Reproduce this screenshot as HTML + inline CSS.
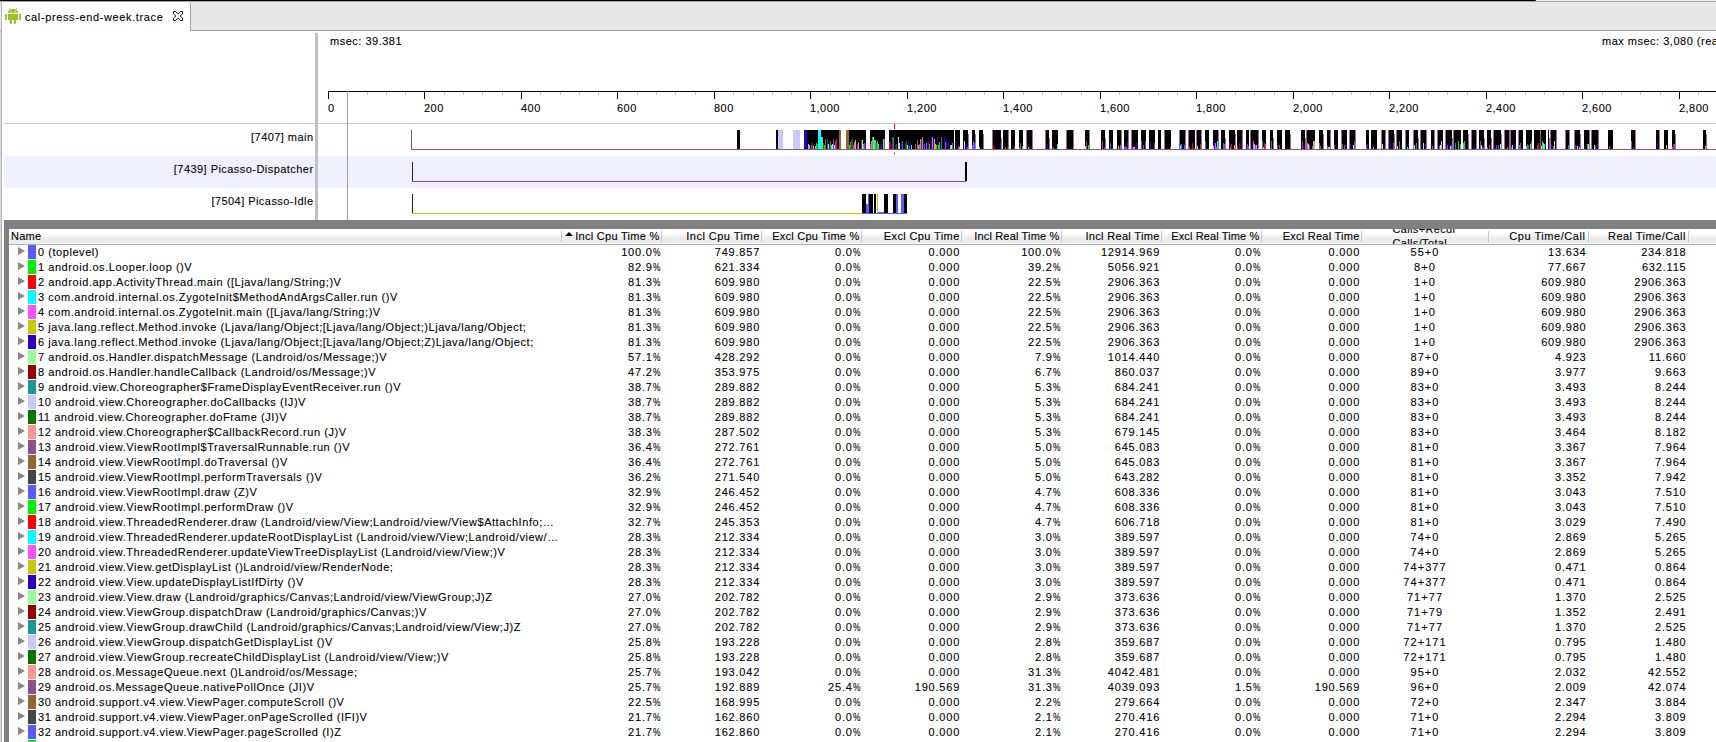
<!DOCTYPE html>
<html><head><meta charset="utf-8"><style>
*{margin:0;padding:0;box-sizing:border-box}
html,body{width:1716px;height:742px;overflow:hidden;background:#fff}
body{position:relative;font-family:"Liberation Sans",sans-serif;font-size:11px;color:#000;-webkit-text-stroke:0.1px #000}
.a{position:absolute}
.t{position:absolute;white-space:pre;line-height:15px}
.r{text-align:right}
.hd{position:absolute;white-space:pre;line-height:13px;letter-spacing:0.25px}
.v{position:absolute;white-space:pre;line-height:15px;text-align:right;letter-spacing:0.8px}
.nm{position:absolute;white-space:pre;line-height:15px;letter-spacing:0.55px;left:38px}
.tri{position:absolute;left:17.8px;width:0;height:0;border-top:4.7px solid transparent;border-bottom:4.7px solid transparent;border-left:7.6px solid #888}
.sq{position:absolute;left:28px;width:8px;height:14px}
.p{display:inline-block;width:7.4px;transform:scaleX(.76);transform-origin:0 0;letter-spacing:0}
.sep{position:absolute;top:231px;width:1px;height:11px;background:#c8c8c8}
</style></head><body>

<div class="a" style="left:0;top:0;width:1716px;height:30px;background:#e8e8e8"></div>
<div class="a" style="left:1537px;top:0;width:179px;height:1px;background:#f0f0f0"></div>
<div class="a" style="left:0;top:0;width:1536px;height:1px;background:#000;border-bottom-right-radius:1px"></div>
<div class="a" style="left:0;top:1px;width:1716px;height:1px;background:#a8a8a8"></div>
<div class="a" style="left:0;top:30px;width:1716px;height:1px;background:#a0a0a0"></div>
<div class="a" style="left:1px;top:2px;width:190px;height:29px;background:#fff;border-left:1px solid #b8b8b8;border-right:1px solid #a0a0a0;border-top-right-radius:3px"></div>
<svg class="a" style="left:4px;top:7px" width="18" height="18" viewBox="0 0 18 18">
<g fill="#97c024">
<path d="M3.8 5.8 L3.8 5 Q4.5 2 8.9 2 Q13.3 2 14 5 L14 5.8 Z"/>
<path d="M5 1 L6.4 2.6" stroke="#97c024" stroke-width="0.9"/>
<path d="M12.8 1 L11.4 2.6" stroke="#97c024" stroke-width="0.9"/>
<path d="M4 7 L14 7 L14 12.3 Q14 13 13.3 13 L4.7 13 Q4 13 4 12.3 Z"/>
<rect x="1" y="7" width="1.8" height="6"/>
<rect x="15.2" y="7" width="1.8" height="6"/>
<rect x="5.7" y="12.5" width="2.1" height="4.3"/>
<rect x="9.8" y="12.5" width="2.1" height="4.3"/>
</g>
<circle cx="6.3" cy="4.5" r="0.6" fill="#fff"/><circle cx="11.4" cy="4.5" r="0.6" fill="#fff"/>
</svg>
<div class="t" style="left:25px;top:10px;letter-spacing:0.62px">cal-press-end-week.trace</div>
<svg class="a" style="left:172px;top:10px" width="12" height="12" viewBox="0 0 12 12">
<path d="M1.5 1.5 L3.8 1.5 L6 3.9 L8.2 1.5 L10.5 1.5 L10.5 3.8 L8.1 6 L10.5 8.2 L10.5 10.5 L8.2 10.5 L6 8.1 L3.8 10.5 L1.5 10.5 L1.5 8.2 L3.9 6 L1.5 3.8 Z" fill="#fff" stroke="#000" stroke-width="0.95" stroke-linejoin="round"/>
</svg>
<div class="a" style="left:0;top:31px;width:1px;height:711px;background:#d8d8d8"></div>
<div class="a" style="left:1px;top:31px;width:1px;height:711px;background:#b8b8b8"></div>
<div class="a" style="left:4px;top:123px;width:1712px;height:1px;background:#c4c4c4"></div>
<div class="a" style="left:4px;top:156px;width:1712px;height:32px;background:#f0effd"></div>
<div class="a" style="left:315px;top:33px;width:3px;height:187px;background:#c0c0c0"></div>
<div class="t r" style="left:100px;width:213.5px;top:130px;letter-spacing:0.45px">[7407] main</div>
<div class="t r" style="left:100px;width:213.5px;top:162px;letter-spacing:0.45px">[7439] Picasso-Dispatcher</div>
<div class="t r" style="left:100px;width:213.5px;top:194px;letter-spacing:0.45px">[7504] Picasso-Idle</div>
<div class="t" style="left:330px;top:34px;letter-spacing:0.5px">msec: 39.381</div>
<div class="t" style="left:1602px;top:34px;letter-spacing:0.5px">max msec: 3,080 (real)</div>
<svg class="a" style="left:0;top:0" width="1716" height="220" viewBox="0 0 1716 220" shape-rendering="crispEdges">
<rect x="328" y="91" width="1388" height="1" fill="#000"/>
<rect x="328" y="91" width="1" height="8" fill="#000"/>
<rect x="347" y="92" width="1" height="3" fill="#c0c0c0"/>
<rect x="367" y="92" width="1" height="3" fill="#c0c0c0"/>
<rect x="386" y="92" width="1" height="3" fill="#c0c0c0"/>
<rect x="405" y="92" width="1" height="3" fill="#c0c0c0"/>
<rect x="424" y="91" width="1" height="8" fill="#000"/>
<rect x="444" y="92" width="1" height="3" fill="#c0c0c0"/>
<rect x="463" y="92" width="1" height="3" fill="#c0c0c0"/>
<rect x="482" y="92" width="1" height="3" fill="#c0c0c0"/>
<rect x="502" y="92" width="1" height="3" fill="#c0c0c0"/>
<rect x="521" y="91" width="1" height="8" fill="#000"/>
<rect x="540" y="92" width="1" height="3" fill="#c0c0c0"/>
<rect x="560" y="92" width="1" height="3" fill="#c0c0c0"/>
<rect x="579" y="92" width="1" height="3" fill="#c0c0c0"/>
<rect x="598" y="92" width="1" height="3" fill="#c0c0c0"/>
<rect x="617" y="91" width="1" height="8" fill="#000"/>
<rect x="637" y="92" width="1" height="3" fill="#c0c0c0"/>
<rect x="656" y="92" width="1" height="3" fill="#c0c0c0"/>
<rect x="675" y="92" width="1" height="3" fill="#c0c0c0"/>
<rect x="695" y="92" width="1" height="3" fill="#c0c0c0"/>
<rect x="714" y="91" width="1" height="8" fill="#000"/>
<rect x="733" y="92" width="1" height="3" fill="#c0c0c0"/>
<rect x="753" y="92" width="1" height="3" fill="#c0c0c0"/>
<rect x="772" y="92" width="1" height="3" fill="#c0c0c0"/>
<rect x="791" y="92" width="1" height="3" fill="#c0c0c0"/>
<rect x="810" y="91" width="1" height="8" fill="#000"/>
<rect x="830" y="92" width="1" height="3" fill="#c0c0c0"/>
<rect x="849" y="92" width="1" height="3" fill="#c0c0c0"/>
<rect x="868" y="92" width="1" height="3" fill="#c0c0c0"/>
<rect x="888" y="92" width="1" height="3" fill="#c0c0c0"/>
<rect x="907" y="91" width="1" height="8" fill="#000"/>
<rect x="926" y="92" width="1" height="3" fill="#c0c0c0"/>
<rect x="946" y="92" width="1" height="3" fill="#c0c0c0"/>
<rect x="965" y="92" width="1" height="3" fill="#c0c0c0"/>
<rect x="984" y="92" width="1" height="3" fill="#c0c0c0"/>
<rect x="1003" y="91" width="1" height="8" fill="#000"/>
<rect x="1023" y="92" width="1" height="3" fill="#c0c0c0"/>
<rect x="1042" y="92" width="1" height="3" fill="#c0c0c0"/>
<rect x="1061" y="92" width="1" height="3" fill="#c0c0c0"/>
<rect x="1081" y="92" width="1" height="3" fill="#c0c0c0"/>
<rect x="1100" y="91" width="1" height="8" fill="#000"/>
<rect x="1119" y="92" width="1" height="3" fill="#c0c0c0"/>
<rect x="1139" y="92" width="1" height="3" fill="#c0c0c0"/>
<rect x="1158" y="92" width="1" height="3" fill="#c0c0c0"/>
<rect x="1177" y="92" width="1" height="3" fill="#c0c0c0"/>
<rect x="1196" y="91" width="1" height="8" fill="#000"/>
<rect x="1216" y="92" width="1" height="3" fill="#c0c0c0"/>
<rect x="1235" y="92" width="1" height="3" fill="#c0c0c0"/>
<rect x="1254" y="92" width="1" height="3" fill="#c0c0c0"/>
<rect x="1274" y="92" width="1" height="3" fill="#c0c0c0"/>
<rect x="1293" y="91" width="1" height="8" fill="#000"/>
<rect x="1312" y="92" width="1" height="3" fill="#c0c0c0"/>
<rect x="1332" y="92" width="1" height="3" fill="#c0c0c0"/>
<rect x="1351" y="92" width="1" height="3" fill="#c0c0c0"/>
<rect x="1370" y="92" width="1" height="3" fill="#c0c0c0"/>
<rect x="1389" y="91" width="1" height="8" fill="#000"/>
<rect x="1409" y="92" width="1" height="3" fill="#c0c0c0"/>
<rect x="1428" y="92" width="1" height="3" fill="#c0c0c0"/>
<rect x="1447" y="92" width="1" height="3" fill="#c0c0c0"/>
<rect x="1467" y="92" width="1" height="3" fill="#c0c0c0"/>
<rect x="1486" y="91" width="1" height="8" fill="#000"/>
<rect x="1505" y="92" width="1" height="3" fill="#c0c0c0"/>
<rect x="1525" y="92" width="1" height="3" fill="#c0c0c0"/>
<rect x="1544" y="92" width="1" height="3" fill="#c0c0c0"/>
<rect x="1563" y="92" width="1" height="3" fill="#c0c0c0"/>
<rect x="1582" y="91" width="1" height="8" fill="#000"/>
<rect x="1602" y="92" width="1" height="3" fill="#c0c0c0"/>
<rect x="1621" y="92" width="1" height="3" fill="#c0c0c0"/>
<rect x="1640" y="92" width="1" height="3" fill="#c0c0c0"/>
<rect x="1660" y="92" width="1" height="3" fill="#c0c0c0"/>
<rect x="1679" y="91" width="1" height="8" fill="#000"/>
<rect x="1698" y="92" width="1" height="3" fill="#c0c0c0"/>
<rect x="347" y="91" width="1" height="129" fill="#a0a0a0"/>
</svg>
<div class="t" style="left:328px;top:101px;letter-spacing:0.45px">0</div>
<div class="t" style="left:424px;top:101px;letter-spacing:0.45px">200</div>
<div class="t" style="left:521px;top:101px;letter-spacing:0.45px">400</div>
<div class="t" style="left:617px;top:101px;letter-spacing:0.45px">600</div>
<div class="t" style="left:714px;top:101px;letter-spacing:0.45px">800</div>
<div class="t" style="left:810px;top:101px;letter-spacing:0.45px">1,000</div>
<div class="t" style="left:907px;top:101px;letter-spacing:0.45px">1,200</div>
<div class="t" style="left:1003px;top:101px;letter-spacing:0.45px">1,400</div>
<div class="t" style="left:1100px;top:101px;letter-spacing:0.45px">1,600</div>
<div class="t" style="left:1196px;top:101px;letter-spacing:0.45px">1,800</div>
<div class="t" style="left:1293px;top:101px;letter-spacing:0.45px">2,000</div>
<div class="t" style="left:1389px;top:101px;letter-spacing:0.45px">2,200</div>
<div class="t" style="left:1486px;top:101px;letter-spacing:0.45px">2,400</div>
<div class="t" style="left:1582px;top:101px;letter-spacing:0.45px">2,600</div>
<div class="t" style="left:1679px;top:101px;letter-spacing:0.45px">2,800</div>
<svg class="a" style="left:0;top:124px" width="1716" height="96" viewBox="0 124 1716 96" shape-rendering="crispEdges">
<rect x="411" y="130" width="1" height="20" fill="rgb(140,80,140)"/>
<rect x="411" y="149" width="1305" height="1" fill="rgb(140,80,140)"/>
<rect x="737" y="130" width="3" height="19" fill="#000"/>
<rect x="776" y="130" width="3" height="19" fill="#000"/>
<rect x="807" y="130" width="11" height="19" fill="#000"/>
<rect x="821" y="130" width="18" height="19" fill="#000"/>
<rect x="849" y="130" width="17" height="19" fill="#000"/>
<rect x="870" y="130" width="15" height="19" fill="#000"/>
<rect x="889" y="130" width="65" height="19" fill="#000"/>
<rect x="955" y="130" width="5" height="19" fill="#000"/>
<rect x="963" y="130" width="5" height="19" fill="#000"/>
<rect x="972" y="130" width="3" height="19" fill="#000"/>
<rect x="979" y="130" width="4" height="19" fill="#000"/>
<rect x="993" y="130" width="8" height="19" fill="#000"/>
<rect x="1003" y="130" width="5" height="19" fill="#000"/>
<rect x="1011" y="130" width="4" height="19" fill="#000"/>
<rect x="1019" y="130" width="4" height="19" fill="#000"/>
<rect x="1027" y="130" width="5" height="19" fill="#000"/>
<rect x="1046" y="130" width="3" height="19" fill="#000"/>
<rect x="1052" y="130" width="6" height="19" fill="#000"/>
<rect x="1067" y="130" width="6" height="19" fill="#000"/>
<rect x="1085" y="130" width="4" height="19" fill="#000"/>
<rect x="1101" y="130" width="4" height="19" fill="#000"/>
<rect x="1109" y="130" width="4" height="19" fill="#000"/>
<rect x="1117" y="130" width="4" height="19" fill="#000"/>
<rect x="1124" y="130" width="4" height="19" fill="#000"/>
<rect x="1132" y="130" width="6" height="19" fill="#000"/>
<rect x="1141" y="130" width="5" height="19" fill="#000"/>
<rect x="1149" y="130" width="6" height="19" fill="#000"/>
<rect x="1158" y="130" width="3" height="19" fill="#000"/>
<rect x="1165" y="130" width="6" height="19" fill="#000"/>
<rect x="1180" y="130" width="5" height="19" fill="#000"/>
<rect x="1189" y="130" width="6" height="19" fill="#000"/>
<rect x="1197" y="130" width="4" height="19" fill="#000"/>
<rect x="1205" y="130" width="4" height="19" fill="#000"/>
<rect x="1213" y="130" width="5" height="19" fill="#000"/>
<rect x="1221" y="130" width="4" height="19" fill="#000"/>
<rect x="1229" y="130" width="6" height="19" fill="#000"/>
<rect x="1237" y="130" width="5" height="19" fill="#000"/>
<rect x="1246" y="130" width="3" height="19" fill="#000"/>
<rect x="1251" y="130" width="7" height="19" fill="#000"/>
<rect x="1262" y="130" width="4" height="19" fill="#000"/>
<rect x="1270" y="130" width="3" height="19" fill="#000"/>
<rect x="1277" y="130" width="5" height="19" fill="#000"/>
<rect x="1285" y="130" width="5" height="19" fill="#000"/>
<rect x="1301" y="130" width="4" height="19" fill="#000"/>
<rect x="1307" y="130" width="8" height="19" fill="#000"/>
<rect x="1319" y="130" width="4" height="19" fill="#000"/>
<rect x="1327" y="130" width="3" height="19" fill="#000"/>
<rect x="1334" y="130" width="4" height="19" fill="#000"/>
<rect x="1342" y="130" width="5" height="19" fill="#000"/>
<rect x="1350" y="130" width="5" height="19" fill="#000"/>
<rect x="1366" y="130" width="3" height="19" fill="#000"/>
<rect x="1371" y="130" width="6" height="19" fill="#000"/>
<rect x="1382" y="130" width="3" height="19" fill="#000"/>
<rect x="1389" y="130" width="5" height="19" fill="#000"/>
<rect x="1397" y="130" width="5" height="19" fill="#000"/>
<rect x="1406" y="130" width="3" height="19" fill="#000"/>
<rect x="1414" y="130" width="4" height="19" fill="#000"/>
<rect x="1421" y="130" width="5" height="19" fill="#000"/>
<rect x="1431" y="130" width="3" height="19" fill="#000"/>
<rect x="1438" y="130" width="5" height="19" fill="#000"/>
<rect x="1446" y="130" width="6" height="19" fill="#000"/>
<rect x="1454" y="130" width="7" height="19" fill="#000"/>
<rect x="1463" y="130" width="5" height="19" fill="#000"/>
<rect x="1472" y="130" width="4" height="19" fill="#000"/>
<rect x="1479" y="130" width="5" height="19" fill="#000"/>
<rect x="1487" y="130" width="4" height="19" fill="#000"/>
<rect x="1494" y="130" width="7" height="19" fill="#000"/>
<rect x="1505" y="130" width="4" height="19" fill="#000"/>
<rect x="1511" y="130" width="5" height="19" fill="#000"/>
<rect x="1519" y="130" width="4" height="19" fill="#000"/>
<rect x="1526" y="130" width="6" height="19" fill="#000"/>
<rect x="1534" y="130" width="6" height="19" fill="#000"/>
<rect x="1541" y="130" width="5" height="19" fill="#000"/>
<rect x="1548" y="130" width="1" height="19" fill="#000"/>
<rect x="1551" y="130" width="5" height="19" fill="#000"/>
<rect x="1566" y="130" width="3" height="19" fill="#000"/>
<rect x="1575" y="130" width="5" height="19" fill="#000"/>
<rect x="1584" y="130" width="5" height="19" fill="#000"/>
<rect x="1592" y="130" width="6" height="19" fill="#000"/>
<rect x="1608" y="130" width="5" height="19" fill="#000"/>
<rect x="1631" y="130" width="4" height="19" fill="#000"/>
<rect x="1656" y="130" width="3" height="19" fill="#000"/>
<rect x="1664" y="130" width="4" height="19" fill="#000"/>
<rect x="1672" y="130" width="3" height="19" fill="#000"/>
<rect x="1703" y="130" width="3" height="19" fill="#000"/>
<rect x="778" y="130" width="5" height="19" fill="rgb(200,200,255)"/>
<rect x="793" y="130" width="7" height="19" fill="rgb(200,200,255)"/>
<rect x="804" y="130" width="3" height="19" fill="rgb(40,0,200)"/>
<rect x="818" y="130" width="3" height="19" fill="rgb(0,255,255)"/>
<rect x="839" y="130" width="2" height="19" fill="rgb(150,100,50)"/>
<rect x="846" y="130" width="3" height="19" fill="rgb(150,100,50)"/>
<rect x="808" y="144" width="1" height="5" fill="rgb(255,150,150)"/>
<rect x="809" y="145" width="1" height="4" fill="rgb(0,255,255)"/>
<rect x="810" y="146" width="1" height="3" fill="rgb(40,0,200)"/>
<rect x="811" y="145" width="1" height="4" fill="rgb(140,80,140)"/>
<rect x="812" y="143" width="1" height="6" fill="rgb(255,0,0)"/>
<rect x="813" y="146" width="1" height="3" fill="rgb(0,255,255)"/>
<rect x="815" y="146" width="1" height="3" fill="rgb(255,150,150)"/>
<rect x="816" y="143" width="1" height="6" fill="rgb(0,240,0)"/>
<rect x="817" y="144" width="1" height="5" fill="rgb(30,150,150)"/>
<rect x="821" y="137" width="1" height="12" fill="rgb(0,255,255)"/>
<rect x="822" y="137" width="1" height="12" fill="rgb(200,200,0)"/>
<rect x="823" y="143" width="1" height="6" fill="rgb(0,120,0)"/>
<rect x="824" y="145" width="1" height="4" fill="rgb(0,240,0)"/>
<rect x="825" y="139" width="1" height="10" fill="rgb(140,80,140)"/>
<rect x="827" y="139" width="1" height="10" fill="rgb(0,120,0)"/>
<rect x="828" y="144" width="1" height="5" fill="rgb(150,255,150)"/>
<rect x="829" y="142" width="1" height="7" fill="rgb(40,0,200)"/>
<rect x="830" y="141" width="1" height="8" fill="rgb(150,100,50)"/>
<rect x="831" y="145" width="1" height="4" fill="rgb(0,255,255)"/>
<rect x="832" y="144" width="1" height="5" fill="rgb(200,200,255)"/>
<rect x="833" y="139" width="1" height="10" fill="rgb(140,80,140)"/>
<rect x="834" y="145" width="1" height="4" fill="rgb(200,200,255)"/>
<rect x="835" y="141" width="1" height="8" fill="rgb(90,90,255)"/>
<rect x="836" y="139" width="1" height="10" fill="rgb(255,0,0)"/>
<rect x="849" y="145" width="1" height="4" fill="rgb(0,240,0)"/>
<rect x="850" y="142" width="1" height="7" fill="rgb(150,100,50)"/>
<rect x="851" y="140" width="1" height="9" fill="rgb(0,120,0)"/>
<rect x="852" y="139" width="1" height="10" fill="rgb(0,120,0)"/>
<rect x="853" y="145" width="1" height="4" fill="rgb(90,90,255)"/>
<rect x="854" y="142" width="1" height="7" fill="rgb(255,80,255)"/>
<rect x="855" y="140" width="1" height="9" fill="rgb(255,150,150)"/>
<rect x="857" y="144" width="1" height="5" fill="rgb(150,100,50)"/>
<rect x="858" y="142" width="1" height="7" fill="rgb(255,80,255)"/>
<rect x="861" y="140" width="1" height="9" fill="rgb(0,120,0)"/>
<rect x="862" y="140" width="1" height="9" fill="rgb(150,255,150)"/>
<rect x="863" y="144" width="1" height="5" fill="rgb(255,80,255)"/>
<rect x="864" y="143" width="1" height="6" fill="rgb(90,90,255)"/>
<rect x="865" y="144" width="1" height="5" fill="rgb(150,0,0)"/>
<rect x="870" y="144" width="1" height="5" fill="rgb(140,80,140)"/>
<rect x="871" y="141" width="1" height="8" fill="rgb(255,80,255)"/>
<rect x="872" y="137" width="1" height="12" fill="rgb(0,240,0)"/>
<rect x="873" y="137" width="1" height="12" fill="rgb(255,150,150)"/>
<rect x="874" y="140" width="1" height="9" fill="rgb(0,255,255)"/>
<rect x="875" y="140" width="1" height="9" fill="rgb(0,240,0)"/>
<rect x="876" y="143" width="1" height="6" fill="rgb(150,100,50)"/>
<rect x="877" y="141" width="1" height="8" fill="rgb(0,240,0)"/>
<rect x="878" y="144" width="1" height="5" fill="rgb(0,255,255)"/>
<rect x="880" y="145" width="1" height="4" fill="rgb(40,0,200)"/>
<rect x="881" y="144" width="1" height="5" fill="rgb(150,0,0)"/>
<rect x="883" y="139" width="1" height="10" fill="rgb(0,255,255)"/>
<rect x="884" y="139" width="1" height="10" fill="rgb(150,100,50)"/>
<rect x="889" y="142" width="1" height="7" fill="rgb(255,0,0)"/>
<rect x="890" y="141" width="1" height="8" fill="rgb(150,0,0)"/>
<rect x="891" y="144" width="1" height="5" fill="rgb(40,0,200)"/>
<rect x="892" y="137" width="1" height="12" fill="rgb(0,120,0)"/>
<rect x="893" y="137" width="1" height="12" fill="rgb(90,90,255)"/>
<rect x="895" y="145" width="1" height="4" fill="rgb(150,0,0)"/>
<rect x="896" y="144" width="1" height="5" fill="rgb(0,120,0)"/>
<rect x="898" y="137" width="1" height="12" fill="rgb(200,200,255)"/>
<rect x="899" y="143" width="1" height="6" fill="rgb(150,255,150)"/>
<rect x="901" y="143" width="1" height="6" fill="rgb(40,0,200)"/>
<rect x="902" y="141" width="1" height="8" fill="rgb(90,90,255)"/>
<rect x="905" y="143" width="1" height="6" fill="rgb(0,120,0)"/>
<rect x="906" y="141" width="1" height="8" fill="rgb(0,120,0)"/>
<rect x="907" y="145" width="1" height="4" fill="rgb(150,255,150)"/>
<rect x="908" y="141" width="1" height="8" fill="rgb(40,0,200)"/>
<rect x="909" y="146" width="1" height="3" fill="rgb(90,90,255)"/>
<rect x="911" y="145" width="1" height="4" fill="rgb(0,255,255)"/>
<rect x="915" y="144" width="1" height="5" fill="rgb(140,80,140)"/>
<rect x="917" y="140" width="1" height="9" fill="rgb(150,100,50)"/>
<rect x="918" y="145" width="1" height="4" fill="rgb(200,200,0)"/>
<rect x="919" y="144" width="1" height="5" fill="rgb(90,90,255)"/>
<rect x="920" y="139" width="1" height="10" fill="rgb(255,80,255)"/>
<rect x="921" y="139" width="1" height="10" fill="rgb(0,120,0)"/>
<rect x="922" y="137" width="1" height="12" fill="rgb(255,80,255)"/>
<rect x="923" y="145" width="1" height="4" fill="rgb(40,0,200)"/>
<rect x="924" y="144" width="1" height="5" fill="rgb(140,80,140)"/>
<rect x="926" y="143" width="1" height="6" fill="rgb(90,90,255)"/>
<rect x="927" y="142" width="1" height="7" fill="rgb(40,0,200)"/>
<rect x="928" y="141" width="1" height="8" fill="rgb(150,0,0)"/>
<rect x="929" y="144" width="1" height="5" fill="rgb(0,240,0)"/>
<rect x="931" y="139" width="1" height="10" fill="rgb(40,0,200)"/>
<rect x="932" y="137" width="1" height="12" fill="rgb(255,80,255)"/>
<rect x="933" y="137" width="1" height="12" fill="rgb(40,0,200)"/>
<rect x="934" y="139" width="1" height="10" fill="rgb(200,200,0)"/>
<rect x="935" y="144" width="1" height="5" fill="rgb(200,200,0)"/>
<rect x="936" y="145" width="1" height="4" fill="rgb(0,240,0)"/>
<rect x="937" y="137" width="1" height="12" fill="rgb(40,0,200)"/>
<rect x="938" y="145" width="1" height="4" fill="rgb(0,240,0)"/>
<rect x="939" y="142" width="1" height="7" fill="rgb(0,240,0)"/>
<rect x="941" y="137" width="1" height="12" fill="rgb(90,90,255)"/>
<rect x="944" y="137" width="1" height="12" fill="rgb(40,0,200)"/>
<rect x="945" y="142" width="1" height="7" fill="rgb(150,100,50)"/>
<rect x="946" y="139" width="1" height="10" fill="rgb(40,0,200)"/>
<rect x="948" y="142" width="1" height="7" fill="rgb(40,0,200)"/>
<rect x="950" y="145" width="1" height="4" fill="rgb(255,150,150)"/>
<rect x="951" y="145" width="1" height="4" fill="rgb(150,255,150)"/>
<rect x="952" y="143" width="1" height="6" fill="rgb(30,150,150)"/>
<rect x="956" y="141" width="1" height="8" fill="rgb(40,0,200)"/>
<rect x="958" y="146" width="1" height="3" fill="rgb(150,100,50)"/>
<rect x="959" y="147" width="1" height="2" fill="rgb(255,150,150)"/>
<rect x="964" y="141" width="1" height="8" fill="rgb(150,255,150)"/>
<rect x="965" y="144" width="1" height="5" fill="rgb(40,0,200)"/>
<rect x="966" y="144" width="1" height="5" fill="rgb(40,0,200)"/>
<rect x="967" y="147" width="1" height="2" fill="rgb(140,80,140)"/>
<rect x="972" y="145" width="1" height="4" fill="rgb(90,90,255)"/>
<rect x="973" y="141" width="1" height="8" fill="rgb(90,90,255)"/>
<rect x="974" y="143" width="1" height="6" fill="rgb(90,90,255)"/>
<rect x="979" y="147" width="1" height="2" fill="rgb(0,255,255)"/>
<rect x="993" y="145" width="1" height="4" fill="rgb(150,0,0)"/>
<rect x="994" y="146" width="1" height="3" fill="rgb(150,0,0)"/>
<rect x="1000" y="143" width="1" height="6" fill="rgb(40,0,200)"/>
<rect x="1005" y="147" width="1" height="2" fill="rgb(140,80,140)"/>
<rect x="1007" y="147" width="1" height="2" fill="rgb(150,0,0)"/>
<rect x="1014" y="146" width="1" height="3" fill="rgb(255,0,0)"/>
<rect x="1019" y="147" width="1" height="2" fill="rgb(150,100,50)"/>
<rect x="1020" y="143" width="1" height="6" fill="rgb(140,80,140)"/>
<rect x="1022" y="146" width="1" height="3" fill="rgb(0,240,0)"/>
<rect x="1028" y="147" width="1" height="2" fill="rgb(200,200,0)"/>
<rect x="1029" y="146" width="1" height="3" fill="rgb(40,0,200)"/>
<rect x="1047" y="144" width="1" height="5" fill="rgb(40,0,200)"/>
<rect x="1052" y="147" width="1" height="2" fill="rgb(150,0,0)"/>
<rect x="1053" y="147" width="1" height="2" fill="rgb(140,80,140)"/>
<rect x="1057" y="144" width="1" height="5" fill="rgb(0,255,255)"/>
<rect x="1085" y="146" width="1" height="3" fill="rgb(150,255,150)"/>
<rect x="1086" y="141" width="1" height="8" fill="rgb(140,80,140)"/>
<rect x="1088" y="145" width="1" height="4" fill="rgb(0,240,0)"/>
<rect x="1102" y="141" width="1" height="8" fill="rgb(140,80,140)"/>
<rect x="1104" y="147" width="1" height="2" fill="rgb(255,0,0)"/>
<rect x="1110" y="143" width="1" height="6" fill="rgb(90,90,255)"/>
<rect x="1118" y="146" width="1" height="3" fill="rgb(200,200,0)"/>
<rect x="1119" y="147" width="1" height="2" fill="rgb(150,0,0)"/>
<rect x="1120" y="145" width="1" height="4" fill="rgb(90,90,255)"/>
<rect x="1124" y="147" width="1" height="2" fill="rgb(30,150,150)"/>
<rect x="1125" y="146" width="1" height="3" fill="rgb(90,90,255)"/>
<rect x="1126" y="147" width="1" height="2" fill="rgb(90,90,255)"/>
<rect x="1127" y="141" width="1" height="8" fill="rgb(40,0,200)"/>
<rect x="1132" y="147" width="1" height="2" fill="rgb(255,0,0)"/>
<rect x="1133" y="147" width="1" height="2" fill="rgb(255,80,255)"/>
<rect x="1134" y="147" width="1" height="2" fill="rgb(255,150,150)"/>
<rect x="1135" y="145" width="1" height="4" fill="rgb(40,0,200)"/>
<rect x="1136" y="143" width="1" height="6" fill="rgb(40,0,200)"/>
<rect x="1141" y="141" width="1" height="8" fill="rgb(140,80,140)"/>
<rect x="1143" y="145" width="1" height="4" fill="rgb(140,80,140)"/>
<rect x="1145" y="141" width="1" height="8" fill="rgb(90,90,255)"/>
<rect x="1150" y="141" width="1" height="8" fill="rgb(40,0,200)"/>
<rect x="1154" y="143" width="1" height="6" fill="rgb(140,80,140)"/>
<rect x="1170" y="147" width="1" height="2" fill="rgb(0,240,0)"/>
<rect x="1180" y="145" width="1" height="4" fill="rgb(0,255,255)"/>
<rect x="1181" y="144" width="1" height="5" fill="rgb(90,90,255)"/>
<rect x="1182" y="147" width="1" height="2" fill="rgb(40,0,200)"/>
<rect x="1184" y="145" width="1" height="4" fill="rgb(90,90,255)"/>
<rect x="1189" y="147" width="1" height="2" fill="rgb(140,80,140)"/>
<rect x="1192" y="143" width="1" height="6" fill="rgb(255,0,0)"/>
<rect x="1194" y="147" width="1" height="2" fill="rgb(150,0,0)"/>
<rect x="1197" y="146" width="1" height="3" fill="rgb(150,255,150)"/>
<rect x="1200" y="144" width="1" height="5" fill="rgb(255,0,0)"/>
<rect x="1205" y="141" width="1" height="8" fill="rgb(30,150,150)"/>
<rect x="1213" y="146" width="1" height="3" fill="rgb(200,200,255)"/>
<rect x="1214" y="141" width="1" height="8" fill="rgb(40,0,200)"/>
<rect x="1215" y="143" width="1" height="6" fill="rgb(255,80,255)"/>
<rect x="1216" y="147" width="1" height="2" fill="rgb(90,90,255)"/>
<rect x="1217" y="141" width="1" height="8" fill="rgb(0,255,255)"/>
<rect x="1223" y="143" width="1" height="6" fill="rgb(30,150,150)"/>
<rect x="1224" y="144" width="1" height="5" fill="rgb(140,80,140)"/>
<rect x="1229" y="143" width="1" height="6" fill="rgb(40,0,200)"/>
<rect x="1230" y="147" width="1" height="2" fill="rgb(90,90,255)"/>
<rect x="1231" y="144" width="1" height="5" fill="rgb(255,0,0)"/>
<rect x="1234" y="145" width="1" height="4" fill="rgb(255,150,150)"/>
<rect x="1237" y="146" width="1" height="3" fill="rgb(255,0,0)"/>
<rect x="1239" y="143" width="1" height="6" fill="rgb(150,0,0)"/>
<rect x="1241" y="141" width="1" height="8" fill="rgb(40,0,200)"/>
<rect x="1246" y="147" width="1" height="2" fill="rgb(40,0,200)"/>
<rect x="1247" y="144" width="1" height="5" fill="rgb(90,90,255)"/>
<rect x="1248" y="146" width="1" height="3" fill="rgb(90,90,255)"/>
<rect x="1253" y="141" width="1" height="8" fill="rgb(255,80,255)"/>
<rect x="1254" y="144" width="1" height="5" fill="rgb(200,200,255)"/>
<rect x="1255" y="145" width="1" height="4" fill="rgb(90,90,255)"/>
<rect x="1256" y="145" width="1" height="4" fill="rgb(255,150,150)"/>
<rect x="1257" y="146" width="1" height="3" fill="rgb(40,0,200)"/>
<rect x="1262" y="141" width="1" height="8" fill="rgb(30,150,150)"/>
<rect x="1263" y="147" width="1" height="2" fill="rgb(255,150,150)"/>
<rect x="1264" y="143" width="1" height="6" fill="rgb(255,0,0)"/>
<rect x="1265" y="144" width="1" height="5" fill="rgb(140,80,140)"/>
<rect x="1270" y="147" width="1" height="2" fill="rgb(150,0,0)"/>
<rect x="1271" y="141" width="1" height="8" fill="rgb(30,150,150)"/>
<rect x="1277" y="145" width="1" height="4" fill="rgb(140,80,140)"/>
<rect x="1279" y="145" width="1" height="4" fill="rgb(140,80,140)"/>
<rect x="1302" y="141" width="1" height="8" fill="rgb(140,80,140)"/>
<rect x="1303" y="146" width="1" height="3" fill="rgb(40,0,200)"/>
<rect x="1307" y="143" width="1" height="6" fill="rgb(255,80,255)"/>
<rect x="1308" y="144" width="1" height="5" fill="rgb(200,200,255)"/>
<rect x="1309" y="145" width="1" height="4" fill="rgb(140,80,140)"/>
<rect x="1312" y="146" width="1" height="3" fill="rgb(30,150,150)"/>
<rect x="1313" y="141" width="1" height="8" fill="rgb(255,150,150)"/>
<rect x="1314" y="141" width="1" height="8" fill="rgb(200,200,0)"/>
<rect x="1319" y="143" width="1" height="6" fill="rgb(140,80,140)"/>
<rect x="1320" y="146" width="1" height="3" fill="rgb(150,100,50)"/>
<rect x="1327" y="146" width="1" height="3" fill="rgb(90,90,255)"/>
<rect x="1328" y="147" width="1" height="2" fill="rgb(200,200,0)"/>
<rect x="1329" y="147" width="1" height="2" fill="rgb(200,200,255)"/>
<rect x="1334" y="145" width="1" height="4" fill="rgb(140,80,140)"/>
<rect x="1342" y="144" width="1" height="5" fill="rgb(140,80,140)"/>
<rect x="1344" y="145" width="1" height="4" fill="rgb(140,80,140)"/>
<rect x="1345" y="145" width="1" height="4" fill="rgb(40,0,200)"/>
<rect x="1350" y="143" width="1" height="6" fill="rgb(40,0,200)"/>
<rect x="1353" y="145" width="1" height="4" fill="rgb(150,255,150)"/>
<rect x="1354" y="141" width="1" height="8" fill="rgb(150,100,50)"/>
<rect x="1366" y="145" width="1" height="4" fill="rgb(90,90,255)"/>
<rect x="1367" y="144" width="1" height="5" fill="rgb(40,0,200)"/>
<rect x="1373" y="147" width="1" height="2" fill="rgb(255,150,150)"/>
<rect x="1382" y="144" width="1" height="5" fill="rgb(150,255,150)"/>
<rect x="1384" y="146" width="1" height="3" fill="rgb(40,0,200)"/>
<rect x="1390" y="141" width="1" height="8" fill="rgb(40,0,200)"/>
<rect x="1393" y="143" width="1" height="6" fill="rgb(140,80,140)"/>
<rect x="1397" y="146" width="1" height="3" fill="rgb(150,255,150)"/>
<rect x="1399" y="141" width="1" height="8" fill="rgb(30,150,150)"/>
<rect x="1407" y="147" width="1" height="2" fill="rgb(0,255,255)"/>
<rect x="1408" y="143" width="1" height="6" fill="rgb(40,0,200)"/>
<rect x="1414" y="145" width="1" height="4" fill="rgb(150,255,150)"/>
<rect x="1416" y="143" width="1" height="6" fill="rgb(30,150,150)"/>
<rect x="1421" y="145" width="1" height="4" fill="rgb(40,0,200)"/>
<rect x="1423" y="143" width="1" height="6" fill="rgb(150,255,150)"/>
<rect x="1425" y="144" width="1" height="5" fill="rgb(40,0,200)"/>
<rect x="1432" y="146" width="1" height="3" fill="rgb(90,90,255)"/>
<rect x="1439" y="146" width="1" height="3" fill="rgb(90,90,255)"/>
<rect x="1440" y="145" width="1" height="4" fill="rgb(150,255,150)"/>
<rect x="1441" y="141" width="1" height="8" fill="rgb(200,200,255)"/>
<rect x="1446" y="144" width="1" height="5" fill="rgb(40,0,200)"/>
<rect x="1447" y="145" width="1" height="4" fill="rgb(140,80,140)"/>
<rect x="1449" y="144" width="1" height="5" fill="rgb(40,0,200)"/>
<rect x="1450" y="146" width="1" height="3" fill="rgb(150,255,150)"/>
<rect x="1451" y="145" width="1" height="4" fill="rgb(140,80,140)"/>
<rect x="1455" y="143" width="1" height="6" fill="rgb(90,90,255)"/>
<rect x="1458" y="141" width="1" height="8" fill="rgb(0,240,0)"/>
<rect x="1460" y="144" width="1" height="5" fill="rgb(0,240,0)"/>
<rect x="1463" y="143" width="1" height="6" fill="rgb(255,80,255)"/>
<rect x="1464" y="141" width="1" height="8" fill="rgb(0,240,0)"/>
<rect x="1465" y="144" width="1" height="5" fill="rgb(40,0,200)"/>
<rect x="1474" y="146" width="1" height="3" fill="rgb(40,0,200)"/>
<rect x="1480" y="141" width="1" height="8" fill="rgb(140,80,140)"/>
<rect x="1481" y="145" width="1" height="4" fill="rgb(200,200,255)"/>
<rect x="1482" y="147" width="1" height="2" fill="rgb(90,90,255)"/>
<rect x="1483" y="147" width="1" height="2" fill="rgb(0,120,0)"/>
<rect x="1487" y="147" width="1" height="2" fill="rgb(90,90,255)"/>
<rect x="1489" y="145" width="1" height="4" fill="rgb(140,80,140)"/>
<rect x="1495" y="147" width="1" height="2" fill="rgb(40,0,200)"/>
<rect x="1496" y="145" width="1" height="4" fill="rgb(90,90,255)"/>
<rect x="1498" y="145" width="1" height="4" fill="rgb(140,80,140)"/>
<rect x="1500" y="144" width="1" height="5" fill="rgb(150,255,150)"/>
<rect x="1507" y="147" width="1" height="2" fill="rgb(150,100,50)"/>
<rect x="1508" y="147" width="1" height="2" fill="rgb(150,0,0)"/>
<rect x="1511" y="147" width="1" height="2" fill="rgb(90,90,255)"/>
<rect x="1512" y="145" width="1" height="4" fill="rgb(200,200,255)"/>
<rect x="1515" y="141" width="1" height="8" fill="rgb(40,0,200)"/>
<rect x="1519" y="145" width="1" height="4" fill="rgb(30,150,150)"/>
<rect x="1520" y="143" width="1" height="6" fill="rgb(140,80,140)"/>
<rect x="1526" y="146" width="1" height="3" fill="rgb(0,255,255)"/>
<rect x="1527" y="144" width="1" height="5" fill="rgb(140,80,140)"/>
<rect x="1528" y="145" width="1" height="4" fill="rgb(140,80,140)"/>
<rect x="1530" y="144" width="1" height="5" fill="rgb(200,200,0)"/>
<rect x="1531" y="141" width="1" height="8" fill="rgb(30,150,150)"/>
<rect x="1537" y="145" width="1" height="4" fill="rgb(150,100,50)"/>
<rect x="1538" y="143" width="1" height="6" fill="rgb(255,0,0)"/>
<rect x="1541" y="146" width="1" height="3" fill="rgb(150,255,150)"/>
<rect x="1542" y="141" width="1" height="8" fill="rgb(0,240,0)"/>
<rect x="1543" y="143" width="1" height="6" fill="rgb(200,200,255)"/>
<rect x="1544" y="144" width="1" height="5" fill="rgb(0,255,255)"/>
<rect x="1548" y="147" width="1" height="2" fill="rgb(40,0,200)"/>
<rect x="1551" y="144" width="1" height="5" fill="rgb(40,0,200)"/>
<rect x="1553" y="146" width="1" height="3" fill="rgb(140,80,140)"/>
<rect x="1554" y="141" width="1" height="8" fill="rgb(150,255,150)"/>
<rect x="1568" y="145" width="1" height="4" fill="rgb(30,150,150)"/>
<rect x="1575" y="145" width="1" height="4" fill="rgb(0,120,0)"/>
<rect x="1576" y="145" width="1" height="4" fill="rgb(40,0,200)"/>
<rect x="1577" y="146" width="1" height="3" fill="rgb(150,255,150)"/>
<rect x="1578" y="145" width="1" height="4" fill="rgb(40,0,200)"/>
<rect x="1579" y="147" width="1" height="2" fill="rgb(255,150,150)"/>
<rect x="1584" y="146" width="1" height="3" fill="rgb(40,0,200)"/>
<rect x="1587" y="144" width="1" height="5" fill="rgb(0,240,0)"/>
<rect x="1588" y="144" width="1" height="5" fill="rgb(150,255,150)"/>
<rect x="1594" y="145" width="1" height="4" fill="rgb(150,255,150)"/>
<rect x="1595" y="146" width="1" height="3" fill="rgb(90,90,255)"/>
<rect x="1609" y="146" width="1" height="3" fill="rgb(150,100,50)"/>
<rect x="1631" y="141" width="1" height="8" fill="rgb(90,90,255)"/>
<rect x="1633" y="147" width="1" height="2" fill="rgb(0,120,0)"/>
<rect x="1634" y="147" width="1" height="2" fill="rgb(40,0,200)"/>
<rect x="1657" y="141" width="1" height="8" fill="rgb(40,0,200)"/>
<rect x="1666" y="145" width="1" height="4" fill="rgb(200,200,0)"/>
<rect x="1672" y="147" width="1" height="2" fill="rgb(140,80,140)"/>
<rect x="1673" y="144" width="1" height="5" fill="rgb(255,0,0)"/>
<rect x="1674" y="144" width="1" height="5" fill="rgb(90,90,255)"/>
<rect x="1705" y="146" width="1" height="3" fill="rgb(255,150,150)"/>
<rect x="968" y="134" width="1" height="15" fill="rgb(140,80,140)" fill-opacity="0.85"/>
<rect x="975" y="134" width="1" height="15" fill="rgb(140,80,140)" fill-opacity="0.85"/>
<rect x="983" y="134" width="1" height="15" fill="rgb(140,80,140)" fill-opacity="0.85"/>
<rect x="1001" y="138" width="1" height="11" fill="rgb(140,80,140)" fill-opacity="0.85"/>
<rect x="992" y="130" width="1" height="19" fill="rgb(140,80,140)" fill-opacity="0.85"/>
<rect x="1008" y="130" width="1" height="19" fill="rgb(140,80,140)" fill-opacity="0.85"/>
<rect x="1032" y="130" width="1" height="19" fill="rgb(140,80,140)" fill-opacity="0.85"/>
<rect x="1026" y="130" width="1" height="19" fill="rgb(140,80,140)" fill-opacity="0.85"/>
<rect x="1049" y="138" width="1" height="11" fill="rgb(140,80,140)" fill-opacity="0.85"/>
<rect x="1045" y="130" width="1" height="19" fill="rgb(140,80,140)" fill-opacity="0.85"/>
<rect x="1073" y="130" width="1" height="19" fill="rgb(140,80,140)" fill-opacity="0.85"/>
<rect x="1066" y="130" width="1" height="19" fill="rgb(140,80,140)" fill-opacity="0.85"/>
<rect x="1089" y="130" width="1" height="19" fill="rgb(140,80,140)" fill-opacity="0.85"/>
<rect x="1105" y="138" width="1" height="11" fill="rgb(140,80,140)" fill-opacity="0.85"/>
<rect x="1121" y="130" width="1" height="19" fill="rgb(140,80,140)" fill-opacity="0.85"/>
<rect x="1128" y="130" width="1" height="19" fill="rgb(140,80,140)" fill-opacity="0.85"/>
<rect x="1131" y="130" width="1" height="19" fill="rgb(140,80,140)" fill-opacity="0.85"/>
<rect x="1164" y="130" width="1" height="19" fill="rgb(140,80,140)" fill-opacity="0.85"/>
<rect x="1185" y="130" width="1" height="19" fill="rgb(140,80,140)" fill-opacity="0.85"/>
<rect x="1179" y="130" width="1" height="19" fill="rgb(140,80,140)" fill-opacity="0.85"/>
<rect x="1188" y="130" width="1" height="19" fill="rgb(140,80,140)" fill-opacity="0.85"/>
<rect x="1201" y="130" width="1" height="19" fill="rgb(140,80,140)" fill-opacity="0.85"/>
<rect x="1196" y="130" width="1" height="19" fill="rgb(140,80,140)" fill-opacity="0.85"/>
<rect x="1218" y="130" width="1" height="19" fill="rgb(140,80,140)" fill-opacity="0.85"/>
<rect x="1225" y="138" width="1" height="11" fill="rgb(140,80,140)" fill-opacity="0.85"/>
<rect x="1235" y="134" width="1" height="15" fill="rgb(140,80,140)" fill-opacity="0.85"/>
<rect x="1242" y="130" width="1" height="19" fill="rgb(140,80,140)" fill-opacity="0.85"/>
<rect x="1258" y="130" width="1" height="19" fill="rgb(140,80,140)" fill-opacity="0.85"/>
<rect x="1250" y="130" width="1" height="19" fill="rgb(140,80,140)" fill-opacity="0.85"/>
<rect x="1273" y="138" width="1" height="11" fill="rgb(140,80,140)" fill-opacity="0.85"/>
<rect x="1290" y="134" width="1" height="15" fill="rgb(140,80,140)" fill-opacity="0.85"/>
<rect x="1305" y="138" width="1" height="11" fill="rgb(140,80,140)" fill-opacity="0.85"/>
<rect x="1306" y="130" width="1" height="19" fill="rgb(140,80,140)" fill-opacity="0.85"/>
<rect x="1323" y="134" width="1" height="15" fill="rgb(140,80,140)" fill-opacity="0.85"/>
<rect x="1330" y="130" width="1" height="19" fill="rgb(140,80,140)" fill-opacity="0.85"/>
<rect x="1341" y="130" width="1" height="19" fill="rgb(140,80,140)" fill-opacity="0.85"/>
<rect x="1355" y="130" width="1" height="19" fill="rgb(140,80,140)" fill-opacity="0.85"/>
<rect x="1349" y="130" width="1" height="19" fill="rgb(140,80,140)" fill-opacity="0.85"/>
<rect x="1385" y="130" width="1" height="19" fill="rgb(140,80,140)" fill-opacity="0.85"/>
<rect x="1381" y="130" width="1" height="19" fill="rgb(140,80,140)" fill-opacity="0.85"/>
<rect x="1394" y="134" width="1" height="15" fill="rgb(140,80,140)" fill-opacity="0.85"/>
<rect x="1388" y="130" width="1" height="19" fill="rgb(140,80,140)" fill-opacity="0.85"/>
<rect x="1396" y="130" width="1" height="19" fill="rgb(140,80,140)" fill-opacity="0.85"/>
<rect x="1405" y="130" width="1" height="19" fill="rgb(140,80,140)" fill-opacity="0.85"/>
<rect x="1418" y="138" width="1" height="11" fill="rgb(140,80,140)" fill-opacity="0.85"/>
<rect x="1413" y="130" width="1" height="19" fill="rgb(140,80,140)" fill-opacity="0.85"/>
<rect x="1426" y="130" width="1" height="19" fill="rgb(140,80,140)" fill-opacity="0.85"/>
<rect x="1420" y="130" width="1" height="19" fill="rgb(140,80,140)" fill-opacity="0.85"/>
<rect x="1434" y="130" width="1" height="19" fill="rgb(140,80,140)" fill-opacity="0.85"/>
<rect x="1437" y="130" width="1" height="19" fill="rgb(140,80,140)" fill-opacity="0.85"/>
<rect x="1452" y="138" width="1" height="11" fill="rgb(140,80,140)" fill-opacity="0.85"/>
<rect x="1445" y="130" width="1" height="19" fill="rgb(140,80,140)" fill-opacity="0.85"/>
<rect x="1453" y="130" width="1" height="19" fill="rgb(140,80,140)" fill-opacity="0.85"/>
<rect x="1468" y="134" width="1" height="15" fill="rgb(140,80,140)" fill-opacity="0.85"/>
<rect x="1476" y="130" width="1" height="19" fill="rgb(140,80,140)" fill-opacity="0.85"/>
<rect x="1471" y="130" width="1" height="19" fill="rgb(140,80,140)" fill-opacity="0.85"/>
<rect x="1484" y="138" width="1" height="11" fill="rgb(140,80,140)" fill-opacity="0.85"/>
<rect x="1491" y="138" width="1" height="11" fill="rgb(140,80,140)" fill-opacity="0.85"/>
<rect x="1501" y="134" width="1" height="15" fill="rgb(140,80,140)" fill-opacity="0.85"/>
<rect x="1493" y="130" width="1" height="19" fill="rgb(140,80,140)" fill-opacity="0.85"/>
<rect x="1509" y="130" width="1" height="19" fill="rgb(140,80,140)" fill-opacity="0.85"/>
<rect x="1504" y="130" width="1" height="19" fill="rgb(140,80,140)" fill-opacity="0.85"/>
<rect x="1510" y="130" width="1" height="19" fill="rgb(140,80,140)" fill-opacity="0.85"/>
<rect x="1518" y="130" width="1" height="19" fill="rgb(140,80,140)" fill-opacity="0.85"/>
<rect x="1540" y="134" width="1" height="15" fill="rgb(140,80,140)" fill-opacity="0.85"/>
<rect x="1540" y="130" width="1" height="19" fill="rgb(140,80,140)" fill-opacity="0.85"/>
<rect x="1549" y="138" width="1" height="11" fill="rgb(140,80,140)" fill-opacity="0.85"/>
<rect x="1556" y="130" width="1" height="19" fill="rgb(140,80,140)" fill-opacity="0.85"/>
<rect x="1550" y="130" width="1" height="19" fill="rgb(140,80,140)" fill-opacity="0.85"/>
<rect x="1569" y="130" width="1" height="19" fill="rgb(140,80,140)" fill-opacity="0.85"/>
<rect x="1565" y="130" width="1" height="19" fill="rgb(140,80,140)" fill-opacity="0.85"/>
<rect x="1580" y="134" width="1" height="15" fill="rgb(140,80,140)" fill-opacity="0.85"/>
<rect x="1574" y="130" width="1" height="19" fill="rgb(140,80,140)" fill-opacity="0.85"/>
<rect x="1589" y="130" width="1" height="19" fill="rgb(140,80,140)" fill-opacity="0.85"/>
<rect x="1598" y="130" width="1" height="19" fill="rgb(140,80,140)" fill-opacity="0.85"/>
<rect x="1591" y="130" width="1" height="19" fill="rgb(140,80,140)" fill-opacity="0.85"/>
<rect x="1635" y="130" width="1" height="19" fill="rgb(140,80,140)" fill-opacity="0.85"/>
<rect x="1659" y="130" width="1" height="19" fill="rgb(140,80,140)" fill-opacity="0.85"/>
<rect x="1675" y="134" width="1" height="15" fill="rgb(140,80,140)" fill-opacity="0.85"/>
<rect x="1706" y="134" width="1" height="15" fill="rgb(140,80,140)" fill-opacity="0.85"/>
<rect x="894" y="124" width="1" height="5" fill="#f00"/>
<rect x="894" y="152" width="1" height="3" fill="#888"/>
<rect x="412" y="162" width="1" height="19" fill="#222"/>
<rect x="412" y="181" width="554" height="1" fill="rgb(140,80,140)"/>
<rect x="965" y="162" width="2" height="19" fill="#000"/>
<rect x="412" y="194" width="1" height="19" fill="#222"/>
<rect x="412" y="213" width="450" height="1" fill="rgb(200,200,0)"/>
<rect x="862" y="213" width="45" height="1" fill="rgb(90,90,255)"/>
<rect x="862" y="194" width="4" height="19" fill="#000"/>
<rect x="866" y="204" width="2" height="9" fill="rgb(90,90,255)"/>
<rect x="868" y="194" width="1" height="19" fill="rgb(90,90,255)"/>
<rect x="869" y="194" width="4" height="19" fill="#000"/>
<rect x="874" y="194" width="2" height="19" fill="#000"/>
<rect x="877" y="194" width="1" height="19" fill="rgb(200,200,0)"/>
<rect x="878" y="212" width="6" height="1" fill="rgb(90,90,255)"/>
<rect x="884" y="194" width="4" height="19" fill="#000"/>
<rect x="893" y="194" width="3" height="19" fill="#000"/>
<rect x="896" y="194" width="2" height="19" fill="rgb(90,90,255)"/>
<rect x="901" y="194" width="3" height="19" fill="rgb(90,90,255)"/>
<rect x="904" y="194" width="3" height="19" fill="#000"/>
</svg>
<div class="a" style="left:4px;top:220px;width:1712px;height:9px;background:#808080"></div>
<div class="a" style="left:4px;top:220px;width:5px;height:522px;background:#808080"></div>
<div class="a" style="left:9px;top:229px;width:1707px;height:15px;background:linear-gradient(#fff 0px,#fff 4px,#f6f6f6 6px,#ebebeb 9px,#ebebeb 13.5px,#f3f3f3 14px,#f3f3f3 15px)"></div>
<div class="a" style="left:9px;top:244px;width:1707px;height:1px;background:#b0b0b0"></div>
<div class="hd" style="left:11px;top:230px">Name</div>
<div class="hd r" style="left:561px;width:98.59px;top:230px;letter-spacing:0.29px">Incl Cpu Time %</div>
<div class="hd r" style="left:661px;width:98.78px;top:230px;letter-spacing:0.48px">Incl Cpu Time</div>
<div class="hd r" style="left:761px;width:98.54px;top:230px;letter-spacing:0.24px">Excl Cpu Time %</div>
<div class="hd r" style="left:861px;width:98.68px;top:230px;letter-spacing:0.38px">Excl Cpu Time</div>
<div class="hd r" style="left:961px;width:98.47px;top:230px;letter-spacing:0.17px">Incl Real Time %</div>
<div class="hd r" style="left:1061px;width:98.62px;top:230px;letter-spacing:0.32px">Incl Real Time</div>
<div class="hd r" style="left:1161px;width:98.42px;top:230px;letter-spacing:0.12px">Excl Real Time %</div>
<div class="hd r" style="left:1261px;width:98.55px;top:230px;letter-spacing:0.25px">Excl Real Time</div>
<div class="a" style="left:565px;top:232px;width:0;height:0;border-left:4px solid transparent;border-right:4px solid transparent;border-bottom:4px solid #000"></div>
<div class="a" style="left:1362px;top:229px;width:126px;height:15px;overflow:hidden"><div class="hd" style="left:30.5px;top:-7px;line-height:14px;letter-spacing:0.35px">Calls+Recur
Calls/Total</div></div>
<div class="hd r" style="left:1485px;width:100.5px;top:230px;letter-spacing:0.55px">Cpu Time/Call</div>
<div class="hd r" style="left:1585px;width:100.9px;top:230px;letter-spacing:0.45px">Real Time/Call</div>
<div class="sep" style="left:561px"></div>
<div class="sep" style="left:661px"></div>
<div class="sep" style="left:761px"></div>
<div class="sep" style="left:861px"></div>
<div class="sep" style="left:961px"></div>
<div class="sep" style="left:1061px"></div>
<div class="sep" style="left:1161px"></div>
<div class="sep" style="left:1261px"></div>
<div class="sep" style="left:1361px"></div>
<div class="sep" style="left:1488px"></div>
<div class="sep" style="left:1588px"></div>
<div class="sep" style="left:1688px"></div>
<div class="tri" style="top:247px"></div>
<div class="sq" style="top:245px;background:rgb(90,90,255)"></div>
<div class="nm" style="top:245px">0 (toplevel)</div>
<div class="v" style="left:560.1px;width:100px;top:245px">100.0<span class="p">%</span></div>
<div class="v" style="left:660.1px;width:100px;top:245px">749.857</div>
<div class="v" style="left:760.1px;width:100px;top:245px">0.0<span class="p">%</span></div>
<div class="v" style="left:860.1px;width:100px;top:245px">0.000</div>
<div class="v" style="left:960.0999999999999px;width:100px;top:245px">100.0<span class="p">%</span></div>
<div class="v" style="left:1060.1px;width:100px;top:245px">12914.969</div>
<div class="v" style="left:1160.1px;width:100px;top:245px">0.0<span class="p">%</span></div>
<div class="v" style="left:1260.1px;width:100px;top:245px">0.000</div>
<div class="t" style="left:1361px;width:127px;top:245px;text-align:center;letter-spacing:1.05px;padding-left:1px">55+0</div>
<div class="v" style="left:1486.5px;width:100px;top:245px">13.634</div>
<div class="v" style="left:1586.5px;width:100px;top:245px">234.818</div>
<div class="tri" style="top:262px"></div>
<div class="sq" style="top:260px;background:rgb(0,240,0)"></div>
<div class="nm" style="top:260px">1 android.os.Looper.loop ()V</div>
<div class="v" style="left:560.1px;width:100px;top:260px">82.9<span class="p">%</span></div>
<div class="v" style="left:660.1px;width:100px;top:260px">621.334</div>
<div class="v" style="left:760.1px;width:100px;top:260px">0.0<span class="p">%</span></div>
<div class="v" style="left:860.1px;width:100px;top:260px">0.000</div>
<div class="v" style="left:960.0999999999999px;width:100px;top:260px">39.2<span class="p">%</span></div>
<div class="v" style="left:1060.1px;width:100px;top:260px">5056.921</div>
<div class="v" style="left:1160.1px;width:100px;top:260px">0.0<span class="p">%</span></div>
<div class="v" style="left:1260.1px;width:100px;top:260px">0.000</div>
<div class="t" style="left:1361px;width:127px;top:260px;text-align:center;letter-spacing:1.05px;padding-left:1px">8+0</div>
<div class="v" style="left:1486.5px;width:100px;top:260px">77.667</div>
<div class="v" style="left:1586.5px;width:100px;top:260px">632.115</div>
<div class="tri" style="top:277px"></div>
<div class="sq" style="top:275px;background:rgb(255,0,0)"></div>
<div class="nm" style="top:275px">2 android.app.ActivityThread.main ([Ljava/lang/String;)V</div>
<div class="v" style="left:560.1px;width:100px;top:275px">81.3<span class="p">%</span></div>
<div class="v" style="left:660.1px;width:100px;top:275px">609.980</div>
<div class="v" style="left:760.1px;width:100px;top:275px">0.0<span class="p">%</span></div>
<div class="v" style="left:860.1px;width:100px;top:275px">0.000</div>
<div class="v" style="left:960.0999999999999px;width:100px;top:275px">22.5<span class="p">%</span></div>
<div class="v" style="left:1060.1px;width:100px;top:275px">2906.363</div>
<div class="v" style="left:1160.1px;width:100px;top:275px">0.0<span class="p">%</span></div>
<div class="v" style="left:1260.1px;width:100px;top:275px">0.000</div>
<div class="t" style="left:1361px;width:127px;top:275px;text-align:center;letter-spacing:1.05px;padding-left:1px">1+0</div>
<div class="v" style="left:1486.5px;width:100px;top:275px">609.980</div>
<div class="v" style="left:1586.5px;width:100px;top:275px">2906.363</div>
<div class="tri" style="top:292px"></div>
<div class="sq" style="top:290px;background:rgb(0,255,255)"></div>
<div class="nm" style="top:290px">3 com.android.internal.os.ZygoteInit$MethodAndArgsCaller.run ()V</div>
<div class="v" style="left:560.1px;width:100px;top:290px">81.3<span class="p">%</span></div>
<div class="v" style="left:660.1px;width:100px;top:290px">609.980</div>
<div class="v" style="left:760.1px;width:100px;top:290px">0.0<span class="p">%</span></div>
<div class="v" style="left:860.1px;width:100px;top:290px">0.000</div>
<div class="v" style="left:960.0999999999999px;width:100px;top:290px">22.5<span class="p">%</span></div>
<div class="v" style="left:1060.1px;width:100px;top:290px">2906.363</div>
<div class="v" style="left:1160.1px;width:100px;top:290px">0.0<span class="p">%</span></div>
<div class="v" style="left:1260.1px;width:100px;top:290px">0.000</div>
<div class="t" style="left:1361px;width:127px;top:290px;text-align:center;letter-spacing:1.05px;padding-left:1px">1+0</div>
<div class="v" style="left:1486.5px;width:100px;top:290px">609.980</div>
<div class="v" style="left:1586.5px;width:100px;top:290px">2906.363</div>
<div class="tri" style="top:307px"></div>
<div class="sq" style="top:305px;background:rgb(255,80,255)"></div>
<div class="nm" style="top:305px">4 com.android.internal.os.ZygoteInit.main ([Ljava/lang/String;)V</div>
<div class="v" style="left:560.1px;width:100px;top:305px">81.3<span class="p">%</span></div>
<div class="v" style="left:660.1px;width:100px;top:305px">609.980</div>
<div class="v" style="left:760.1px;width:100px;top:305px">0.0<span class="p">%</span></div>
<div class="v" style="left:860.1px;width:100px;top:305px">0.000</div>
<div class="v" style="left:960.0999999999999px;width:100px;top:305px">22.5<span class="p">%</span></div>
<div class="v" style="left:1060.1px;width:100px;top:305px">2906.363</div>
<div class="v" style="left:1160.1px;width:100px;top:305px">0.0<span class="p">%</span></div>
<div class="v" style="left:1260.1px;width:100px;top:305px">0.000</div>
<div class="t" style="left:1361px;width:127px;top:305px;text-align:center;letter-spacing:1.05px;padding-left:1px">1+0</div>
<div class="v" style="left:1486.5px;width:100px;top:305px">609.980</div>
<div class="v" style="left:1586.5px;width:100px;top:305px">2906.363</div>
<div class="tri" style="top:322px"></div>
<div class="sq" style="top:320px;background:rgb(200,200,0)"></div>
<div class="nm" style="top:320px">5 java.lang.reflect.Method.invoke (Ljava/lang/Object;[Ljava/lang/Object;)Ljava/lang/Object;</div>
<div class="v" style="left:560.1px;width:100px;top:320px">81.3<span class="p">%</span></div>
<div class="v" style="left:660.1px;width:100px;top:320px">609.980</div>
<div class="v" style="left:760.1px;width:100px;top:320px">0.0<span class="p">%</span></div>
<div class="v" style="left:860.1px;width:100px;top:320px">0.000</div>
<div class="v" style="left:960.0999999999999px;width:100px;top:320px">22.5<span class="p">%</span></div>
<div class="v" style="left:1060.1px;width:100px;top:320px">2906.363</div>
<div class="v" style="left:1160.1px;width:100px;top:320px">0.0<span class="p">%</span></div>
<div class="v" style="left:1260.1px;width:100px;top:320px">0.000</div>
<div class="t" style="left:1361px;width:127px;top:320px;text-align:center;letter-spacing:1.05px;padding-left:1px">1+0</div>
<div class="v" style="left:1486.5px;width:100px;top:320px">609.980</div>
<div class="v" style="left:1586.5px;width:100px;top:320px">2906.363</div>
<div class="tri" style="top:337px"></div>
<div class="sq" style="top:335px;background:rgb(40,0,200)"></div>
<div class="nm" style="top:335px">6 java.lang.reflect.Method.invoke (Ljava/lang/Object;[Ljava/lang/Object;Z)Ljava/lang/Object;</div>
<div class="v" style="left:560.1px;width:100px;top:335px">81.3<span class="p">%</span></div>
<div class="v" style="left:660.1px;width:100px;top:335px">609.980</div>
<div class="v" style="left:760.1px;width:100px;top:335px">0.0<span class="p">%</span></div>
<div class="v" style="left:860.1px;width:100px;top:335px">0.000</div>
<div class="v" style="left:960.0999999999999px;width:100px;top:335px">22.5<span class="p">%</span></div>
<div class="v" style="left:1060.1px;width:100px;top:335px">2906.363</div>
<div class="v" style="left:1160.1px;width:100px;top:335px">0.0<span class="p">%</span></div>
<div class="v" style="left:1260.1px;width:100px;top:335px">0.000</div>
<div class="t" style="left:1361px;width:127px;top:335px;text-align:center;letter-spacing:1.05px;padding-left:1px">1+0</div>
<div class="v" style="left:1486.5px;width:100px;top:335px">609.980</div>
<div class="v" style="left:1586.5px;width:100px;top:335px">2906.363</div>
<div class="tri" style="top:352px"></div>
<div class="sq" style="top:350px;background:rgb(150,255,150)"></div>
<div class="nm" style="top:350px">7 android.os.Handler.dispatchMessage (Landroid/os/Message;)V</div>
<div class="v" style="left:560.1px;width:100px;top:350px">57.1<span class="p">%</span></div>
<div class="v" style="left:660.1px;width:100px;top:350px">428.292</div>
<div class="v" style="left:760.1px;width:100px;top:350px">0.0<span class="p">%</span></div>
<div class="v" style="left:860.1px;width:100px;top:350px">0.000</div>
<div class="v" style="left:960.0999999999999px;width:100px;top:350px">7.9<span class="p">%</span></div>
<div class="v" style="left:1060.1px;width:100px;top:350px">1014.440</div>
<div class="v" style="left:1160.1px;width:100px;top:350px">0.0<span class="p">%</span></div>
<div class="v" style="left:1260.1px;width:100px;top:350px">0.000</div>
<div class="t" style="left:1361px;width:127px;top:350px;text-align:center;letter-spacing:1.05px;padding-left:1px">87+0</div>
<div class="v" style="left:1486.5px;width:100px;top:350px">4.923</div>
<div class="v" style="left:1586.5px;width:100px;top:350px">11.660</div>
<div class="tri" style="top:367px"></div>
<div class="sq" style="top:365px;background:rgb(150,0,0)"></div>
<div class="nm" style="top:365px">8 android.os.Handler.handleCallback (Landroid/os/Message;)V</div>
<div class="v" style="left:560.1px;width:100px;top:365px">47.2<span class="p">%</span></div>
<div class="v" style="left:660.1px;width:100px;top:365px">353.975</div>
<div class="v" style="left:760.1px;width:100px;top:365px">0.0<span class="p">%</span></div>
<div class="v" style="left:860.1px;width:100px;top:365px">0.000</div>
<div class="v" style="left:960.0999999999999px;width:100px;top:365px">6.7<span class="p">%</span></div>
<div class="v" style="left:1060.1px;width:100px;top:365px">860.037</div>
<div class="v" style="left:1160.1px;width:100px;top:365px">0.0<span class="p">%</span></div>
<div class="v" style="left:1260.1px;width:100px;top:365px">0.000</div>
<div class="t" style="left:1361px;width:127px;top:365px;text-align:center;letter-spacing:1.05px;padding-left:1px">89+0</div>
<div class="v" style="left:1486.5px;width:100px;top:365px">3.977</div>
<div class="v" style="left:1586.5px;width:100px;top:365px">9.663</div>
<div class="tri" style="top:382px"></div>
<div class="sq" style="top:380px;background:rgb(30,150,150)"></div>
<div class="nm" style="top:380px">9 android.view.Choreographer$FrameDisplayEventReceiver.run ()V</div>
<div class="v" style="left:560.1px;width:100px;top:380px">38.7<span class="p">%</span></div>
<div class="v" style="left:660.1px;width:100px;top:380px">289.882</div>
<div class="v" style="left:760.1px;width:100px;top:380px">0.0<span class="p">%</span></div>
<div class="v" style="left:860.1px;width:100px;top:380px">0.000</div>
<div class="v" style="left:960.0999999999999px;width:100px;top:380px">5.3<span class="p">%</span></div>
<div class="v" style="left:1060.1px;width:100px;top:380px">684.241</div>
<div class="v" style="left:1160.1px;width:100px;top:380px">0.0<span class="p">%</span></div>
<div class="v" style="left:1260.1px;width:100px;top:380px">0.000</div>
<div class="t" style="left:1361px;width:127px;top:380px;text-align:center;letter-spacing:1.05px;padding-left:1px">83+0</div>
<div class="v" style="left:1486.5px;width:100px;top:380px">3.493</div>
<div class="v" style="left:1586.5px;width:100px;top:380px">8.244</div>
<div class="tri" style="top:397px"></div>
<div class="sq" style="top:395px;background:rgb(200,200,255)"></div>
<div class="nm" style="top:395px">10 android.view.Choreographer.doCallbacks (IJ)V</div>
<div class="v" style="left:560.1px;width:100px;top:395px">38.7<span class="p">%</span></div>
<div class="v" style="left:660.1px;width:100px;top:395px">289.882</div>
<div class="v" style="left:760.1px;width:100px;top:395px">0.0<span class="p">%</span></div>
<div class="v" style="left:860.1px;width:100px;top:395px">0.000</div>
<div class="v" style="left:960.0999999999999px;width:100px;top:395px">5.3<span class="p">%</span></div>
<div class="v" style="left:1060.1px;width:100px;top:395px">684.241</div>
<div class="v" style="left:1160.1px;width:100px;top:395px">0.0<span class="p">%</span></div>
<div class="v" style="left:1260.1px;width:100px;top:395px">0.000</div>
<div class="t" style="left:1361px;width:127px;top:395px;text-align:center;letter-spacing:1.05px;padding-left:1px">83+0</div>
<div class="v" style="left:1486.5px;width:100px;top:395px">3.493</div>
<div class="v" style="left:1586.5px;width:100px;top:395px">8.244</div>
<div class="tri" style="top:412px"></div>
<div class="sq" style="top:410px;background:rgb(0,120,0)"></div>
<div class="nm" style="top:410px">11 android.view.Choreographer.doFrame (JI)V</div>
<div class="v" style="left:560.1px;width:100px;top:410px">38.7<span class="p">%</span></div>
<div class="v" style="left:660.1px;width:100px;top:410px">289.882</div>
<div class="v" style="left:760.1px;width:100px;top:410px">0.0<span class="p">%</span></div>
<div class="v" style="left:860.1px;width:100px;top:410px">0.000</div>
<div class="v" style="left:960.0999999999999px;width:100px;top:410px">5.3<span class="p">%</span></div>
<div class="v" style="left:1060.1px;width:100px;top:410px">684.241</div>
<div class="v" style="left:1160.1px;width:100px;top:410px">0.0<span class="p">%</span></div>
<div class="v" style="left:1260.1px;width:100px;top:410px">0.000</div>
<div class="t" style="left:1361px;width:127px;top:410px;text-align:center;letter-spacing:1.05px;padding-left:1px">83+0</div>
<div class="v" style="left:1486.5px;width:100px;top:410px">3.493</div>
<div class="v" style="left:1586.5px;width:100px;top:410px">8.244</div>
<div class="tri" style="top:427px"></div>
<div class="sq" style="top:425px;background:rgb(255,150,150)"></div>
<div class="nm" style="top:425px">12 android.view.Choreographer$CallbackRecord.run (J)V</div>
<div class="v" style="left:560.1px;width:100px;top:425px">38.3<span class="p">%</span></div>
<div class="v" style="left:660.1px;width:100px;top:425px">287.502</div>
<div class="v" style="left:760.1px;width:100px;top:425px">0.0<span class="p">%</span></div>
<div class="v" style="left:860.1px;width:100px;top:425px">0.000</div>
<div class="v" style="left:960.0999999999999px;width:100px;top:425px">5.3<span class="p">%</span></div>
<div class="v" style="left:1060.1px;width:100px;top:425px">679.145</div>
<div class="v" style="left:1160.1px;width:100px;top:425px">0.0<span class="p">%</span></div>
<div class="v" style="left:1260.1px;width:100px;top:425px">0.000</div>
<div class="t" style="left:1361px;width:127px;top:425px;text-align:center;letter-spacing:1.05px;padding-left:1px">83+0</div>
<div class="v" style="left:1486.5px;width:100px;top:425px">3.464</div>
<div class="v" style="left:1586.5px;width:100px;top:425px">8.182</div>
<div class="tri" style="top:442px"></div>
<div class="sq" style="top:440px;background:rgb(140,80,140)"></div>
<div class="nm" style="top:440px">13 android.view.ViewRootImpl$TraversalRunnable.run ()V</div>
<div class="v" style="left:560.1px;width:100px;top:440px">36.4<span class="p">%</span></div>
<div class="v" style="left:660.1px;width:100px;top:440px">272.761</div>
<div class="v" style="left:760.1px;width:100px;top:440px">0.0<span class="p">%</span></div>
<div class="v" style="left:860.1px;width:100px;top:440px">0.000</div>
<div class="v" style="left:960.0999999999999px;width:100px;top:440px">5.0<span class="p">%</span></div>
<div class="v" style="left:1060.1px;width:100px;top:440px">645.083</div>
<div class="v" style="left:1160.1px;width:100px;top:440px">0.0<span class="p">%</span></div>
<div class="v" style="left:1260.1px;width:100px;top:440px">0.000</div>
<div class="t" style="left:1361px;width:127px;top:440px;text-align:center;letter-spacing:1.05px;padding-left:1px">81+0</div>
<div class="v" style="left:1486.5px;width:100px;top:440px">3.367</div>
<div class="v" style="left:1586.5px;width:100px;top:440px">7.964</div>
<div class="tri" style="top:457px"></div>
<div class="sq" style="top:455px;background:rgb(150,100,50)"></div>
<div class="nm" style="top:455px">14 android.view.ViewRootImpl.doTraversal ()V</div>
<div class="v" style="left:560.1px;width:100px;top:455px">36.4<span class="p">%</span></div>
<div class="v" style="left:660.1px;width:100px;top:455px">272.761</div>
<div class="v" style="left:760.1px;width:100px;top:455px">0.0<span class="p">%</span></div>
<div class="v" style="left:860.1px;width:100px;top:455px">0.000</div>
<div class="v" style="left:960.0999999999999px;width:100px;top:455px">5.0<span class="p">%</span></div>
<div class="v" style="left:1060.1px;width:100px;top:455px">645.083</div>
<div class="v" style="left:1160.1px;width:100px;top:455px">0.0<span class="p">%</span></div>
<div class="v" style="left:1260.1px;width:100px;top:455px">0.000</div>
<div class="t" style="left:1361px;width:127px;top:455px;text-align:center;letter-spacing:1.05px;padding-left:1px">81+0</div>
<div class="v" style="left:1486.5px;width:100px;top:455px">3.367</div>
<div class="v" style="left:1586.5px;width:100px;top:455px">7.964</div>
<div class="tri" style="top:472px"></div>
<div class="sq" style="top:470px;background:rgb(70,70,70)"></div>
<div class="nm" style="top:470px">15 android.view.ViewRootImpl.performTraversals ()V</div>
<div class="v" style="left:560.1px;width:100px;top:470px">36.2<span class="p">%</span></div>
<div class="v" style="left:660.1px;width:100px;top:470px">271.540</div>
<div class="v" style="left:760.1px;width:100px;top:470px">0.0<span class="p">%</span></div>
<div class="v" style="left:860.1px;width:100px;top:470px">0.000</div>
<div class="v" style="left:960.0999999999999px;width:100px;top:470px">5.0<span class="p">%</span></div>
<div class="v" style="left:1060.1px;width:100px;top:470px">643.282</div>
<div class="v" style="left:1160.1px;width:100px;top:470px">0.0<span class="p">%</span></div>
<div class="v" style="left:1260.1px;width:100px;top:470px">0.000</div>
<div class="t" style="left:1361px;width:127px;top:470px;text-align:center;letter-spacing:1.05px;padding-left:1px">81+0</div>
<div class="v" style="left:1486.5px;width:100px;top:470px">3.352</div>
<div class="v" style="left:1586.5px;width:100px;top:470px">7.942</div>
<div class="tri" style="top:487px"></div>
<div class="sq" style="top:485px;background:rgb(90,90,255)"></div>
<div class="nm" style="top:485px">16 android.view.ViewRootImpl.draw (Z)V</div>
<div class="v" style="left:560.1px;width:100px;top:485px">32.9<span class="p">%</span></div>
<div class="v" style="left:660.1px;width:100px;top:485px">246.452</div>
<div class="v" style="left:760.1px;width:100px;top:485px">0.0<span class="p">%</span></div>
<div class="v" style="left:860.1px;width:100px;top:485px">0.000</div>
<div class="v" style="left:960.0999999999999px;width:100px;top:485px">4.7<span class="p">%</span></div>
<div class="v" style="left:1060.1px;width:100px;top:485px">608.336</div>
<div class="v" style="left:1160.1px;width:100px;top:485px">0.0<span class="p">%</span></div>
<div class="v" style="left:1260.1px;width:100px;top:485px">0.000</div>
<div class="t" style="left:1361px;width:127px;top:485px;text-align:center;letter-spacing:1.05px;padding-left:1px">81+0</div>
<div class="v" style="left:1486.5px;width:100px;top:485px">3.043</div>
<div class="v" style="left:1586.5px;width:100px;top:485px">7.510</div>
<div class="tri" style="top:502px"></div>
<div class="sq" style="top:500px;background:rgb(0,240,0)"></div>
<div class="nm" style="top:500px">17 android.view.ViewRootImpl.performDraw ()V</div>
<div class="v" style="left:560.1px;width:100px;top:500px">32.9<span class="p">%</span></div>
<div class="v" style="left:660.1px;width:100px;top:500px">246.452</div>
<div class="v" style="left:760.1px;width:100px;top:500px">0.0<span class="p">%</span></div>
<div class="v" style="left:860.1px;width:100px;top:500px">0.000</div>
<div class="v" style="left:960.0999999999999px;width:100px;top:500px">4.7<span class="p">%</span></div>
<div class="v" style="left:1060.1px;width:100px;top:500px">608.336</div>
<div class="v" style="left:1160.1px;width:100px;top:500px">0.0<span class="p">%</span></div>
<div class="v" style="left:1260.1px;width:100px;top:500px">0.000</div>
<div class="t" style="left:1361px;width:127px;top:500px;text-align:center;letter-spacing:1.05px;padding-left:1px">81+0</div>
<div class="v" style="left:1486.5px;width:100px;top:500px">3.043</div>
<div class="v" style="left:1586.5px;width:100px;top:500px">7.510</div>
<div class="tri" style="top:517px"></div>
<div class="sq" style="top:515px;background:rgb(255,0,0)"></div>
<div class="nm" style="top:515px">18 android.view.ThreadedRenderer.draw (Landroid/view/View;Landroid/view/View$AttachInfo;…</div>
<div class="v" style="left:560.1px;width:100px;top:515px">32.7<span class="p">%</span></div>
<div class="v" style="left:660.1px;width:100px;top:515px">245.353</div>
<div class="v" style="left:760.1px;width:100px;top:515px">0.0<span class="p">%</span></div>
<div class="v" style="left:860.1px;width:100px;top:515px">0.000</div>
<div class="v" style="left:960.0999999999999px;width:100px;top:515px">4.7<span class="p">%</span></div>
<div class="v" style="left:1060.1px;width:100px;top:515px">606.718</div>
<div class="v" style="left:1160.1px;width:100px;top:515px">0.0<span class="p">%</span></div>
<div class="v" style="left:1260.1px;width:100px;top:515px">0.000</div>
<div class="t" style="left:1361px;width:127px;top:515px;text-align:center;letter-spacing:1.05px;padding-left:1px">81+0</div>
<div class="v" style="left:1486.5px;width:100px;top:515px">3.029</div>
<div class="v" style="left:1586.5px;width:100px;top:515px">7.490</div>
<div class="tri" style="top:532px"></div>
<div class="sq" style="top:530px;background:rgb(0,255,255)"></div>
<div class="nm" style="top:530px">19 android.view.ThreadedRenderer.updateRootDisplayList (Landroid/view/View;Landroid/view/…</div>
<div class="v" style="left:560.1px;width:100px;top:530px">28.3<span class="p">%</span></div>
<div class="v" style="left:660.1px;width:100px;top:530px">212.334</div>
<div class="v" style="left:760.1px;width:100px;top:530px">0.0<span class="p">%</span></div>
<div class="v" style="left:860.1px;width:100px;top:530px">0.000</div>
<div class="v" style="left:960.0999999999999px;width:100px;top:530px">3.0<span class="p">%</span></div>
<div class="v" style="left:1060.1px;width:100px;top:530px">389.597</div>
<div class="v" style="left:1160.1px;width:100px;top:530px">0.0<span class="p">%</span></div>
<div class="v" style="left:1260.1px;width:100px;top:530px">0.000</div>
<div class="t" style="left:1361px;width:127px;top:530px;text-align:center;letter-spacing:1.05px;padding-left:1px">74+0</div>
<div class="v" style="left:1486.5px;width:100px;top:530px">2.869</div>
<div class="v" style="left:1586.5px;width:100px;top:530px">5.265</div>
<div class="tri" style="top:547px"></div>
<div class="sq" style="top:545px;background:rgb(255,80,255)"></div>
<div class="nm" style="top:545px">20 android.view.ThreadedRenderer.updateViewTreeDisplayList (Landroid/view/View;)V</div>
<div class="v" style="left:560.1px;width:100px;top:545px">28.3<span class="p">%</span></div>
<div class="v" style="left:660.1px;width:100px;top:545px">212.334</div>
<div class="v" style="left:760.1px;width:100px;top:545px">0.0<span class="p">%</span></div>
<div class="v" style="left:860.1px;width:100px;top:545px">0.000</div>
<div class="v" style="left:960.0999999999999px;width:100px;top:545px">3.0<span class="p">%</span></div>
<div class="v" style="left:1060.1px;width:100px;top:545px">389.597</div>
<div class="v" style="left:1160.1px;width:100px;top:545px">0.0<span class="p">%</span></div>
<div class="v" style="left:1260.1px;width:100px;top:545px">0.000</div>
<div class="t" style="left:1361px;width:127px;top:545px;text-align:center;letter-spacing:1.05px;padding-left:1px">74+0</div>
<div class="v" style="left:1486.5px;width:100px;top:545px">2.869</div>
<div class="v" style="left:1586.5px;width:100px;top:545px">5.265</div>
<div class="tri" style="top:562px"></div>
<div class="sq" style="top:560px;background:rgb(200,200,0)"></div>
<div class="nm" style="top:560px">21 android.view.View.getDisplayList ()Landroid/view/RenderNode;</div>
<div class="v" style="left:560.1px;width:100px;top:560px">28.3<span class="p">%</span></div>
<div class="v" style="left:660.1px;width:100px;top:560px">212.334</div>
<div class="v" style="left:760.1px;width:100px;top:560px">0.0<span class="p">%</span></div>
<div class="v" style="left:860.1px;width:100px;top:560px">0.000</div>
<div class="v" style="left:960.0999999999999px;width:100px;top:560px">3.0<span class="p">%</span></div>
<div class="v" style="left:1060.1px;width:100px;top:560px">389.597</div>
<div class="v" style="left:1160.1px;width:100px;top:560px">0.0<span class="p">%</span></div>
<div class="v" style="left:1260.1px;width:100px;top:560px">0.000</div>
<div class="t" style="left:1361px;width:127px;top:560px;text-align:center;letter-spacing:1.05px;padding-left:1px">74+377</div>
<div class="v" style="left:1486.5px;width:100px;top:560px">0.471</div>
<div class="v" style="left:1586.5px;width:100px;top:560px">0.864</div>
<div class="tri" style="top:577px"></div>
<div class="sq" style="top:575px;background:rgb(40,0,200)"></div>
<div class="nm" style="top:575px">22 android.view.View.updateDisplayListIfDirty ()V</div>
<div class="v" style="left:560.1px;width:100px;top:575px">28.3<span class="p">%</span></div>
<div class="v" style="left:660.1px;width:100px;top:575px">212.334</div>
<div class="v" style="left:760.1px;width:100px;top:575px">0.0<span class="p">%</span></div>
<div class="v" style="left:860.1px;width:100px;top:575px">0.000</div>
<div class="v" style="left:960.0999999999999px;width:100px;top:575px">3.0<span class="p">%</span></div>
<div class="v" style="left:1060.1px;width:100px;top:575px">389.597</div>
<div class="v" style="left:1160.1px;width:100px;top:575px">0.0<span class="p">%</span></div>
<div class="v" style="left:1260.1px;width:100px;top:575px">0.000</div>
<div class="t" style="left:1361px;width:127px;top:575px;text-align:center;letter-spacing:1.05px;padding-left:1px">74+377</div>
<div class="v" style="left:1486.5px;width:100px;top:575px">0.471</div>
<div class="v" style="left:1586.5px;width:100px;top:575px">0.864</div>
<div class="tri" style="top:592px"></div>
<div class="sq" style="top:590px;background:rgb(150,255,150)"></div>
<div class="nm" style="top:590px">23 android.view.View.draw (Landroid/graphics/Canvas;Landroid/view/ViewGroup;J)Z</div>
<div class="v" style="left:560.1px;width:100px;top:590px">27.0<span class="p">%</span></div>
<div class="v" style="left:660.1px;width:100px;top:590px">202.782</div>
<div class="v" style="left:760.1px;width:100px;top:590px">0.0<span class="p">%</span></div>
<div class="v" style="left:860.1px;width:100px;top:590px">0.000</div>
<div class="v" style="left:960.0999999999999px;width:100px;top:590px">2.9<span class="p">%</span></div>
<div class="v" style="left:1060.1px;width:100px;top:590px">373.636</div>
<div class="v" style="left:1160.1px;width:100px;top:590px">0.0<span class="p">%</span></div>
<div class="v" style="left:1260.1px;width:100px;top:590px">0.000</div>
<div class="t" style="left:1361px;width:127px;top:590px;text-align:center;letter-spacing:1.05px;padding-left:1px">71+77</div>
<div class="v" style="left:1486.5px;width:100px;top:590px">1.370</div>
<div class="v" style="left:1586.5px;width:100px;top:590px">2.525</div>
<div class="tri" style="top:607px"></div>
<div class="sq" style="top:605px;background:rgb(150,0,0)"></div>
<div class="nm" style="top:605px">24 android.view.ViewGroup.dispatchDraw (Landroid/graphics/Canvas;)V</div>
<div class="v" style="left:560.1px;width:100px;top:605px">27.0<span class="p">%</span></div>
<div class="v" style="left:660.1px;width:100px;top:605px">202.782</div>
<div class="v" style="left:760.1px;width:100px;top:605px">0.0<span class="p">%</span></div>
<div class="v" style="left:860.1px;width:100px;top:605px">0.000</div>
<div class="v" style="left:960.0999999999999px;width:100px;top:605px">2.9<span class="p">%</span></div>
<div class="v" style="left:1060.1px;width:100px;top:605px">373.636</div>
<div class="v" style="left:1160.1px;width:100px;top:605px">0.0<span class="p">%</span></div>
<div class="v" style="left:1260.1px;width:100px;top:605px">0.000</div>
<div class="t" style="left:1361px;width:127px;top:605px;text-align:center;letter-spacing:1.05px;padding-left:1px">71+79</div>
<div class="v" style="left:1486.5px;width:100px;top:605px">1.352</div>
<div class="v" style="left:1586.5px;width:100px;top:605px">2.491</div>
<div class="tri" style="top:622px"></div>
<div class="sq" style="top:620px;background:rgb(30,150,150)"></div>
<div class="nm" style="top:620px">25 android.view.ViewGroup.drawChild (Landroid/graphics/Canvas;Landroid/view/View;J)Z</div>
<div class="v" style="left:560.1px;width:100px;top:620px">27.0<span class="p">%</span></div>
<div class="v" style="left:660.1px;width:100px;top:620px">202.782</div>
<div class="v" style="left:760.1px;width:100px;top:620px">0.0<span class="p">%</span></div>
<div class="v" style="left:860.1px;width:100px;top:620px">0.000</div>
<div class="v" style="left:960.0999999999999px;width:100px;top:620px">2.9<span class="p">%</span></div>
<div class="v" style="left:1060.1px;width:100px;top:620px">373.636</div>
<div class="v" style="left:1160.1px;width:100px;top:620px">0.0<span class="p">%</span></div>
<div class="v" style="left:1260.1px;width:100px;top:620px">0.000</div>
<div class="t" style="left:1361px;width:127px;top:620px;text-align:center;letter-spacing:1.05px;padding-left:1px">71+77</div>
<div class="v" style="left:1486.5px;width:100px;top:620px">1.370</div>
<div class="v" style="left:1586.5px;width:100px;top:620px">2.525</div>
<div class="tri" style="top:637px"></div>
<div class="sq" style="top:635px;background:rgb(200,200,255)"></div>
<div class="nm" style="top:635px">26 android.view.ViewGroup.dispatchGetDisplayList ()V</div>
<div class="v" style="left:560.1px;width:100px;top:635px">25.8<span class="p">%</span></div>
<div class="v" style="left:660.1px;width:100px;top:635px">193.228</div>
<div class="v" style="left:760.1px;width:100px;top:635px">0.0<span class="p">%</span></div>
<div class="v" style="left:860.1px;width:100px;top:635px">0.000</div>
<div class="v" style="left:960.0999999999999px;width:100px;top:635px">2.8<span class="p">%</span></div>
<div class="v" style="left:1060.1px;width:100px;top:635px">359.687</div>
<div class="v" style="left:1160.1px;width:100px;top:635px">0.0<span class="p">%</span></div>
<div class="v" style="left:1260.1px;width:100px;top:635px">0.000</div>
<div class="t" style="left:1361px;width:127px;top:635px;text-align:center;letter-spacing:1.05px;padding-left:1px">72+171</div>
<div class="v" style="left:1486.5px;width:100px;top:635px">0.795</div>
<div class="v" style="left:1586.5px;width:100px;top:635px">1.480</div>
<div class="tri" style="top:652px"></div>
<div class="sq" style="top:650px;background:rgb(0,120,0)"></div>
<div class="nm" style="top:650px">27 android.view.ViewGroup.recreateChildDisplayList (Landroid/view/View;)V</div>
<div class="v" style="left:560.1px;width:100px;top:650px">25.8<span class="p">%</span></div>
<div class="v" style="left:660.1px;width:100px;top:650px">193.228</div>
<div class="v" style="left:760.1px;width:100px;top:650px">0.0<span class="p">%</span></div>
<div class="v" style="left:860.1px;width:100px;top:650px">0.000</div>
<div class="v" style="left:960.0999999999999px;width:100px;top:650px">2.8<span class="p">%</span></div>
<div class="v" style="left:1060.1px;width:100px;top:650px">359.687</div>
<div class="v" style="left:1160.1px;width:100px;top:650px">0.0<span class="p">%</span></div>
<div class="v" style="left:1260.1px;width:100px;top:650px">0.000</div>
<div class="t" style="left:1361px;width:127px;top:650px;text-align:center;letter-spacing:1.05px;padding-left:1px">72+171</div>
<div class="v" style="left:1486.5px;width:100px;top:650px">0.795</div>
<div class="v" style="left:1586.5px;width:100px;top:650px">1.480</div>
<div class="tri" style="top:667px"></div>
<div class="sq" style="top:665px;background:rgb(255,150,150)"></div>
<div class="nm" style="top:665px">28 android.os.MessageQueue.next ()Landroid/os/Message;</div>
<div class="v" style="left:560.1px;width:100px;top:665px">25.7<span class="p">%</span></div>
<div class="v" style="left:660.1px;width:100px;top:665px">193.042</div>
<div class="v" style="left:760.1px;width:100px;top:665px">0.0<span class="p">%</span></div>
<div class="v" style="left:860.1px;width:100px;top:665px">0.000</div>
<div class="v" style="left:960.0999999999999px;width:100px;top:665px">31.3<span class="p">%</span></div>
<div class="v" style="left:1060.1px;width:100px;top:665px">4042.481</div>
<div class="v" style="left:1160.1px;width:100px;top:665px">0.0<span class="p">%</span></div>
<div class="v" style="left:1260.1px;width:100px;top:665px">0.000</div>
<div class="t" style="left:1361px;width:127px;top:665px;text-align:center;letter-spacing:1.05px;padding-left:1px">95+0</div>
<div class="v" style="left:1486.5px;width:100px;top:665px">2.032</div>
<div class="v" style="left:1586.5px;width:100px;top:665px">42.552</div>
<div class="tri" style="top:682px"></div>
<div class="sq" style="top:680px;background:rgb(140,80,140)"></div>
<div class="nm" style="top:680px">29 android.os.MessageQueue.nativePollOnce (JI)V</div>
<div class="v" style="left:560.1px;width:100px;top:680px">25.7<span class="p">%</span></div>
<div class="v" style="left:660.1px;width:100px;top:680px">192.889</div>
<div class="v" style="left:760.1px;width:100px;top:680px">25.4<span class="p">%</span></div>
<div class="v" style="left:860.1px;width:100px;top:680px">190.569</div>
<div class="v" style="left:960.0999999999999px;width:100px;top:680px">31.3<span class="p">%</span></div>
<div class="v" style="left:1060.1px;width:100px;top:680px">4039.093</div>
<div class="v" style="left:1160.1px;width:100px;top:680px">1.5<span class="p">%</span></div>
<div class="v" style="left:1260.1px;width:100px;top:680px">190.569</div>
<div class="t" style="left:1361px;width:127px;top:680px;text-align:center;letter-spacing:1.05px;padding-left:1px">96+0</div>
<div class="v" style="left:1486.5px;width:100px;top:680px">2.009</div>
<div class="v" style="left:1586.5px;width:100px;top:680px">42.074</div>
<div class="tri" style="top:697px"></div>
<div class="sq" style="top:695px;background:rgb(150,100,50)"></div>
<div class="nm" style="top:695px">30 android.support.v4.view.ViewPager.computeScroll ()V</div>
<div class="v" style="left:560.1px;width:100px;top:695px">22.5<span class="p">%</span></div>
<div class="v" style="left:660.1px;width:100px;top:695px">168.995</div>
<div class="v" style="left:760.1px;width:100px;top:695px">0.0<span class="p">%</span></div>
<div class="v" style="left:860.1px;width:100px;top:695px">0.000</div>
<div class="v" style="left:960.0999999999999px;width:100px;top:695px">2.2<span class="p">%</span></div>
<div class="v" style="left:1060.1px;width:100px;top:695px">279.664</div>
<div class="v" style="left:1160.1px;width:100px;top:695px">0.0<span class="p">%</span></div>
<div class="v" style="left:1260.1px;width:100px;top:695px">0.000</div>
<div class="t" style="left:1361px;width:127px;top:695px;text-align:center;letter-spacing:1.05px;padding-left:1px">72+0</div>
<div class="v" style="left:1486.5px;width:100px;top:695px">2.347</div>
<div class="v" style="left:1586.5px;width:100px;top:695px">3.884</div>
<div class="tri" style="top:712px"></div>
<div class="sq" style="top:710px;background:rgb(70,70,70)"></div>
<div class="nm" style="top:710px">31 android.support.v4.view.ViewPager.onPageScrolled (IFI)V</div>
<div class="v" style="left:560.1px;width:100px;top:710px">21.7<span class="p">%</span></div>
<div class="v" style="left:660.1px;width:100px;top:710px">162.860</div>
<div class="v" style="left:760.1px;width:100px;top:710px">0.0<span class="p">%</span></div>
<div class="v" style="left:860.1px;width:100px;top:710px">0.000</div>
<div class="v" style="left:960.0999999999999px;width:100px;top:710px">2.1<span class="p">%</span></div>
<div class="v" style="left:1060.1px;width:100px;top:710px">270.416</div>
<div class="v" style="left:1160.1px;width:100px;top:710px">0.0<span class="p">%</span></div>
<div class="v" style="left:1260.1px;width:100px;top:710px">0.000</div>
<div class="t" style="left:1361px;width:127px;top:710px;text-align:center;letter-spacing:1.05px;padding-left:1px">71+0</div>
<div class="v" style="left:1486.5px;width:100px;top:710px">2.294</div>
<div class="v" style="left:1586.5px;width:100px;top:710px">3.809</div>
<div class="tri" style="top:727px"></div>
<div class="sq" style="top:725px;background:rgb(90,90,255)"></div>
<div class="nm" style="top:725px">32 android.support.v4.view.ViewPager.pageScrolled (I)Z</div>
<div class="v" style="left:560.1px;width:100px;top:725px">21.7<span class="p">%</span></div>
<div class="v" style="left:660.1px;width:100px;top:725px">162.860</div>
<div class="v" style="left:760.1px;width:100px;top:725px">0.0<span class="p">%</span></div>
<div class="v" style="left:860.1px;width:100px;top:725px">0.000</div>
<div class="v" style="left:960.0999999999999px;width:100px;top:725px">2.1<span class="p">%</span></div>
<div class="v" style="left:1060.1px;width:100px;top:725px">270.416</div>
<div class="v" style="left:1160.1px;width:100px;top:725px">0.0<span class="p">%</span></div>
<div class="v" style="left:1260.1px;width:100px;top:725px">0.000</div>
<div class="t" style="left:1361px;width:127px;top:725px;text-align:center;letter-spacing:1.05px;padding-left:1px">71+0</div>
<div class="v" style="left:1486.5px;width:100px;top:725px">2.294</div>
<div class="v" style="left:1586.5px;width:100px;top:725px">3.809</div>
<div class="tri" style="top:742px"></div>
<div class="sq" style="top:740px;background:rgb(0,240,0)"></div>
<div class="nm" style="top:740px"></div>
<div class="v" style="left:560.1px;width:100px;top:740px"></div>
<div class="v" style="left:660.1px;width:100px;top:740px"></div>
<div class="v" style="left:760.1px;width:100px;top:740px"></div>
<div class="v" style="left:860.1px;width:100px;top:740px"></div>
<div class="v" style="left:960.0999999999999px;width:100px;top:740px"></div>
<div class="v" style="left:1060.1px;width:100px;top:740px"></div>
<div class="v" style="left:1160.1px;width:100px;top:740px"></div>
<div class="v" style="left:1260.1px;width:100px;top:740px"></div>
<div class="t" style="left:1361px;width:127px;top:740px;text-align:center;letter-spacing:1.05px;padding-left:1px"></div>
<div class="v" style="left:1486.5px;width:100px;top:740px"></div>
<div class="v" style="left:1586.5px;width:100px;top:740px"></div>
</body></html>
